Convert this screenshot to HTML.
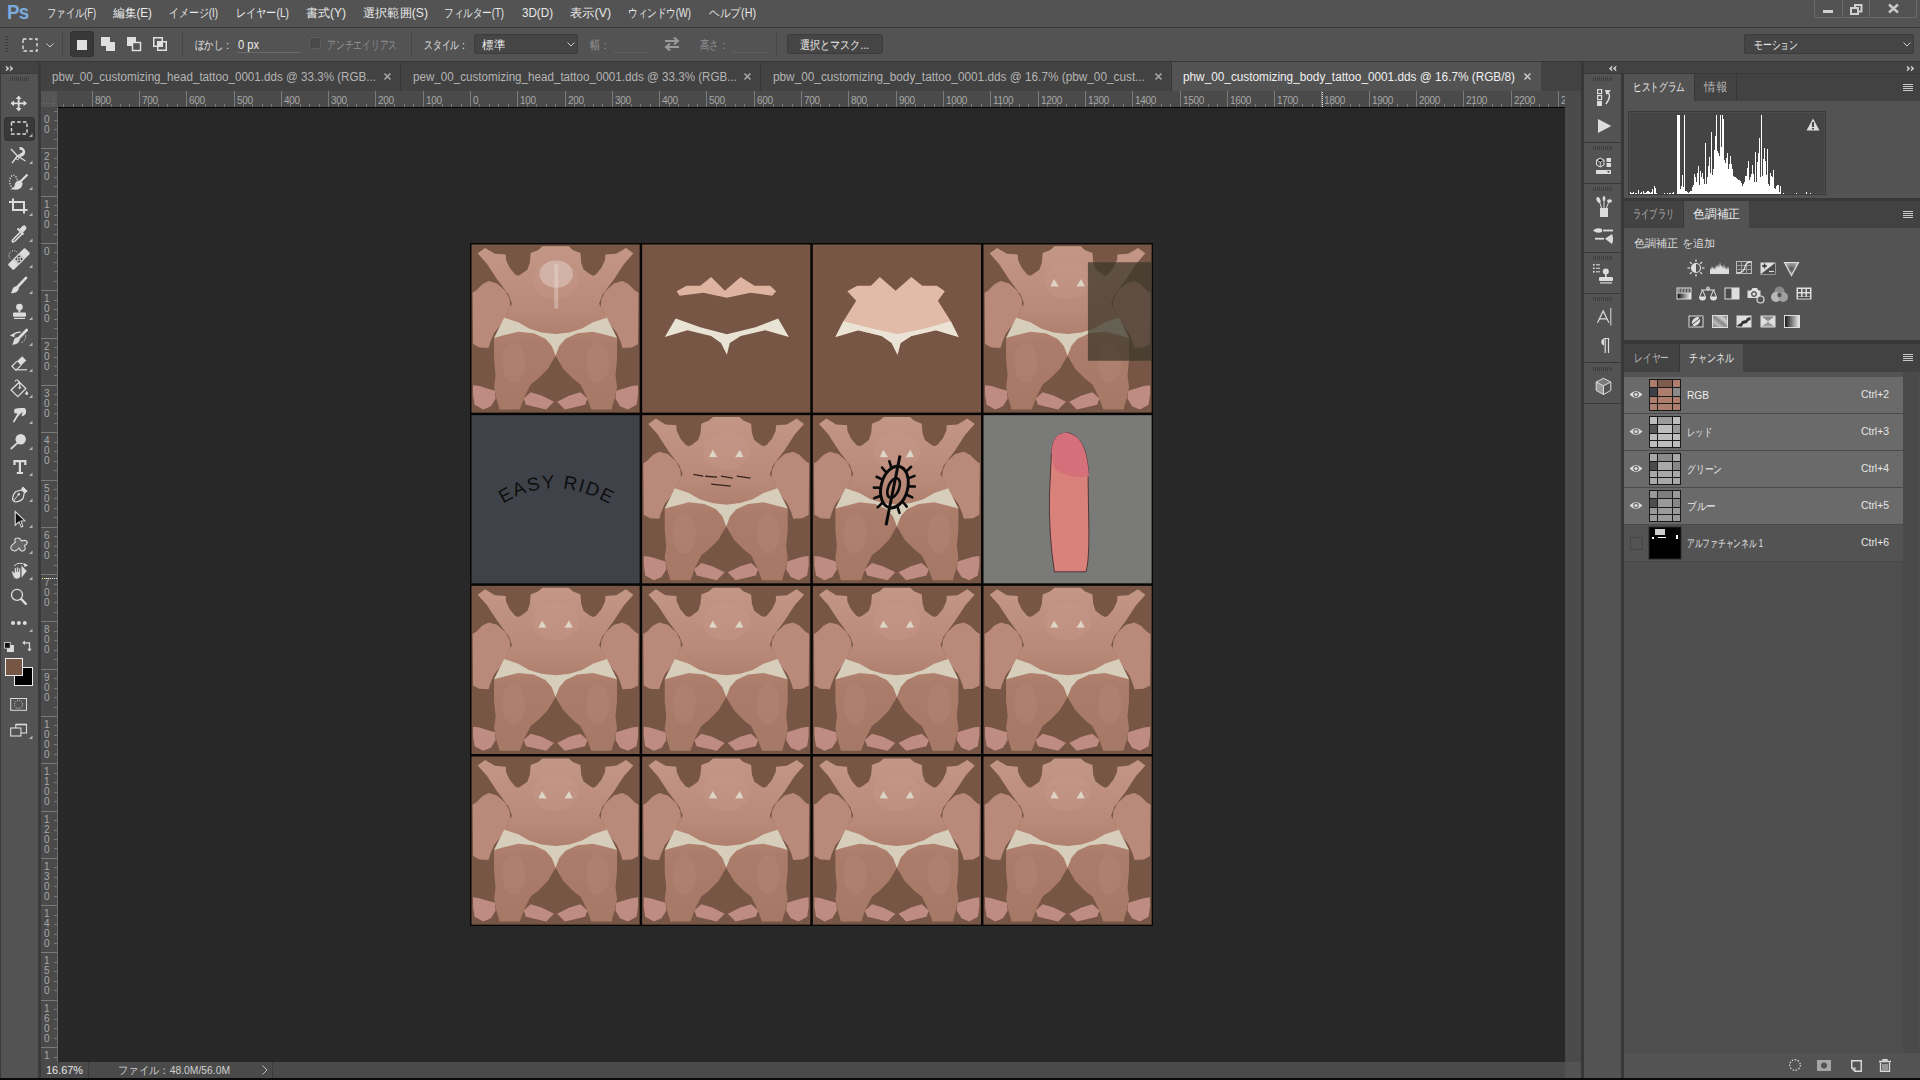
<!DOCTYPE html>
<html><head><meta charset="utf-8">
<style>
*{margin:0;padding:0;box-sizing:border-box}
html,body{width:1920px;height:1080px;overflow:hidden}
body{background:#535353;font-family:"Liberation Sans",sans-serif;position:relative;color:#e6e6e6;font-size:12px}
.a{position:absolute}
.t{position:absolute;white-space:nowrap;line-height:1;transform-origin:0 0}
svg{position:absolute;overflow:visible}
</style></head><body>
<div class="a" style="left:0px;top:0px;width:1920px;height:27px;background:#535353;"></div>
<div class="a" style="left:0px;top:27px;width:1920px;height:1px;background:#383838;"></div>
<div class="a" style="left:0px;top:28px;width:1920px;height:33px;background:#535353;"></div>
<div class="a" style="left:0px;top:61px;width:1920px;height:1px;background:#383838;"></div>
<div class="a" style="left:0px;top:62px;width:41px;height:1018px;background:#3a3a3a;"></div>
<div class="a" style="left:1px;top:62px;width:37px;height:11px;background:#424242;"></div>
<div class="a" style="left:1px;top:74px;width:37px;height:1004px;background:#535353;"></div>
<div class="a" style="left:41px;top:62px;width:1540px;height:29px;background:#424242;"></div>
<div class="a" style="left:41px;top:91px;width:1540px;height:16px;background:#4a4a4a;"></div>
<div class="a" style="left:41px;top:107px;width:16px;height:955px;background:#4a4a4a;"></div>
<div class="a" style="left:41px;top:91px;width:16px;height:16px;background:#555555;"></div>
<div class="a" style="left:58px;top:107px;width:1507px;height:955px;background:#282828;"></div>
<div class="a" style="left:58px;top:107px;width:1507px;height:1px;background:#050505;"></div>
<div class="a" style="left:57px;top:108px;width:1px;height:954px;background:#6e6e6e;"></div>
<div class="a" style="left:1565px;top:107px;width:16px;height:955px;background:#4a4a4a;"></div>
<div class="a" style="left:41px;top:1062px;width:1540px;height:16px;background:#4a4a4a;"></div>
<div class="a" style="left:0px;top:1078px;width:1920px;height:2px;background:#0a0a0a;"></div>
<div class="a" style="left:1581px;top:62px;width:3px;height:1016px;background:#383838;"></div>
<div class="a" style="left:1584px;top:62px;width:336px;height:11px;background:#424242;"></div>
<div class="a" style="left:1584px;top:73px;width:336px;height:1px;background:#383838;"></div>
<div class="a" style="left:1584px;top:74px;width:38px;height:1004px;background:#535353;"></div>
<div class="a" style="left:1621px;top:74px;width:3px;height:1004px;background:#383838;"></div>
<div class="a" style="left:1624px;top:74px;width:296px;height:1004px;background:#535353;"></div>
<div class="t" style="left:7px;top:1px;font-size:21px;font-weight:bold;color:#79abdd;letter-spacing:-0.8px;--w:21.5">Ps</div>
<div class="t" style="left:47px;top:7px;font-size:12px;color:#e8e8e8;--w:49;">ファイル(F)</div>
<div class="t" style="left:113px;top:7px;font-size:12px;color:#e8e8e8;--w:39;">編集(E)</div>
<div class="t" style="left:169px;top:7px;font-size:12px;color:#e8e8e8;--w:49;">イメージ(I)</div>
<div class="t" style="left:236px;top:7px;font-size:12px;color:#e8e8e8;--w:53;">レイヤー(L)</div>
<div class="t" style="left:306px;top:7px;font-size:12px;color:#e8e8e8;--w:40;">書式(Y)</div>
<div class="t" style="left:363px;top:7px;font-size:12px;color:#e8e8e8;--w:65;">選択範囲(S)</div>
<div class="t" style="left:444px;top:7px;font-size:12px;color:#e8e8e8;--w:60;">フィルター(T)</div>
<div class="t" style="left:522px;top:7px;font-size:12px;color:#e8e8e8;--w:31;">3D(D)</div>
<div class="t" style="left:570px;top:7px;font-size:12px;color:#e8e8e8;--w:41;">表示(V)</div>
<div class="t" style="left:628px;top:7px;font-size:12px;color:#e8e8e8;--w:63;">ウィンドウ(W)</div>
<div class="t" style="left:709px;top:7px;font-size:12px;color:#e8e8e8;--w:47;">ヘルプ(H)</div>
<div class="a" style="left:1814px;top:0px;width:103px;height:18px;background:transparent;border:1px solid #6a6a6a;border-top:none;border-radius:0 0 3px 3px"></div>
<div class="a" style="left:1842px;top:0px;width:1px;height:17px;background:#6a6a6a;"></div>
<div class="a" style="left:1869px;top:0px;width:1px;height:17px;background:#6a6a6a;"></div>
<div class="a" style="left:1823px;top:10px;width:10px;height:3px;background:#cfcfcf;"></div>
<svg style="left:1850px;top:4px" width="13" height="11"><path d="M5 3.5V1H11.5V7.5H8.5" fill="none" stroke="#cfcfcf" stroke-width="2"/><rect x="1" y="4" width="7" height="6" fill="none" stroke="#cfcfcf" stroke-width="2"/></svg>
<svg style="left:1888px;top:4px" width="11" height="9"><path d="M1 0.5L10 8.5M10 0.5L1 8.5" stroke="#c8c8c8" stroke-width="2.4"/></svg>
<div class="a" style="left:5px;top:36px;width:3px;height:1px;background:#3c3c3c;"></div>
<div class="a" style="left:5px;top:39px;width:3px;height:1px;background:#3c3c3c;"></div>
<div class="a" style="left:5px;top:42px;width:3px;height:1px;background:#3c3c3c;"></div>
<div class="a" style="left:5px;top:45px;width:3px;height:1px;background:#3c3c3c;"></div>
<div class="a" style="left:5px;top:48px;width:3px;height:1px;background:#3c3c3c;"></div>
<div class="a" style="left:5px;top:51px;width:3px;height:1px;background:#3c3c3c;"></div>
<svg style="left:22px;top:38px" width="16" height="14"><rect x="1" y="1" width="14" height="12" fill="none" stroke="#e0e0e0" stroke-width="1.4" stroke-dasharray="3.5 2.5"/></svg>
<svg style="left:46px;top:43px" width="8" height="5"><path d="M0.5 0.5L4 4L7.5 0.5" fill="none" stroke="#cfcfcf" stroke-width="1"/></svg>
<div class="a" style="left:62px;top:32px;width:1px;height:25px;background:#454545;"></div>
<div class="a" style="left:70px;top:31px;width:24px;height:26px;background:#383838;border-radius:3px;border:1px solid #333"></div>
<div class="a" style="left:77px;top:40px;width:10px;height:10px;background:#e0e0e0;"></div>
<svg style="left:101px;top:37px" width="15" height="15"><rect x="0" y="0" width="9" height="9" fill="#e0e0e0"/><rect x="5" y="5" width="9" height="9" fill="#e0e0e0"/></svg>
<svg style="left:127px;top:37px" width="15" height="15"><rect x="0" y="0" width="9" height="9" fill="#e0e0e0"/><rect x="5.5" y="5.5" width="8" height="8" fill="#535353" stroke="#e0e0e0" stroke-width="1.5"/></svg>
<svg style="left:153px;top:37px" width="15" height="15"><rect x="0.75" y="0.75" width="8.5" height="8.5" fill="none" stroke="#e0e0e0" stroke-width="1.5"/><rect x="4.75" y="4.75" width="8.5" height="8.5" fill="none" stroke="#e0e0e0" stroke-width="1.5"/><rect x="4.75" y="4.75" width="4.5" height="4.5" fill="#e0e0e0"/></svg>
<div class="a" style="left:182px;top:32px;width:1px;height:25px;background:#454545;"></div>
<div class="t" style="left:195px;top:39px;font-size:12px;color:#e0e0e0;--w:37;">ぼかし：</div>
<div class="t" style="left:238px;top:39px;font-size:12px;color:#ececec;--w:21;">0 px</div>
<div class="a" style="left:237px;top:52px;width:64px;height:1px;background:#6a6a6a;"></div>
<div class="a" style="left:309px;top:37px;width:12px;height:12px;background:#4a4a4a;border:1px solid #5e5e5e;border-radius:2px"></div>
<div class="t" style="left:327px;top:39px;font-size:12px;color:#8f8f8f;--w:70;">アンチエイリアス</div>
<div class="a" style="left:411px;top:32px;width:1px;height:25px;background:#454545;"></div>
<div class="t" style="left:424px;top:39px;font-size:12px;color:#e0e0e0;--w:44;">スタイル：</div>
<div class="a" style="left:474px;top:34px;width:104px;height:20px;background:#454545;border:1px solid #3c3c3c;border-radius:2px"></div>
<div class="t" style="left:482px;top:39px;font-size:12px;color:#ececec;--w:23;">標準</div>
<svg style="left:567px;top:42px" width="8" height="5"><path d="M0.5 0.5L4 4L7.5 0.5" fill="none" stroke="#cfcfcf" stroke-width="1"/></svg>
<div class="t" style="left:590px;top:39px;font-size:12px;color:#8f8f8f;--w:20;">幅：</div>
<div class="a" style="left:613px;top:52px;width:36px;height:1px;background:#5e5e5e;"></div>
<svg style="left:664px;top:37px" width="16" height="14"><path d="M1 4H14M10 0.5L14 4L10 7.5" fill="none" stroke="#9a9a9a" stroke-width="2"/><path d="M15 10H2M6 6.5L2 10L6 13.5" fill="none" stroke="#9a9a9a" stroke-width="2"/></svg>
<div class="t" style="left:700px;top:39px;font-size:12px;color:#8f8f8f;--w:28;">高さ：</div>
<div class="a" style="left:731px;top:52px;width:36px;height:1px;background:#5e5e5e;"></div>
<div class="a" style="left:776px;top:32px;width:1px;height:25px;background:#454545;"></div>
<div class="a" style="left:787px;top:34px;width:96px;height:20px;background:#454545;border:1px solid #3c3c3c;border-radius:3px"></div>
<div class="t" style="left:800px;top:39px;font-size:12px;color:#ececec;--w:69;">選択とマスク...</div>
<div class="a" style="left:1744px;top:34px;width:170px;height:20px;background:#454545;border:1px solid #3c3c3c;border-radius:2px"></div>
<div class="t" style="left:1754px;top:39px;font-size:12px;color:#e6e6e6;--w:44;">モーション</div>
<svg style="left:1903px;top:42px" width="8" height="5"><path d="M0.5 0.5L4 4L7.5 0.5" fill="none" stroke="#cfcfcf" stroke-width="1"/></svg>
<div class="a" style="left:400px;top:62px;width:1px;height:29px;background:#383838;"></div>
<div class="t" style="left:52px;top:71px;font-size:12px;color:#b4b4b4;--w:324;">pbw_00_customizing_head_tattoo_0001.dds @ 33.3% (RGB...</div>
<svg style="left:384px;top:73px" width="7" height="7"><path d="M0.5 0.5L6.5 6.5M6.5 0.5L0.5 6.5" stroke="#a8a8a8" stroke-width="1.6"/></svg>
<div class="a" style="left:760px;top:62px;width:1px;height:29px;background:#383838;"></div>
<div class="t" style="left:413px;top:71px;font-size:12px;color:#b4b4b4;--w:324;">pew_00_customizing_head_tattoo_0001.dds @ 33.3% (RGB...</div>
<svg style="left:744px;top:73px" width="7" height="7"><path d="M0.5 0.5L6.5 6.5M6.5 0.5L0.5 6.5" stroke="#a8a8a8" stroke-width="1.6"/></svg>
<div class="a" style="left:1171px;top:62px;width:1px;height:29px;background:#383838;"></div>
<div class="t" style="left:773px;top:71px;font-size:12px;color:#b4b4b4;--w:372;">pbw_00_customizing_body_tattoo_0001.dds @ 16.7% (pbw_00_cust...</div>
<svg style="left:1155px;top:73px" width="7" height="7"><path d="M0.5 0.5L6.5 6.5M6.5 0.5L0.5 6.5" stroke="#a8a8a8" stroke-width="1.6"/></svg>
<div class="a" style="left:1172px;top:62px;width:369px;height:29px;background:#535353;"></div>
<div class="t" style="left:1183px;top:71px;font-size:12px;color:#f0f0f0;--w:332;">phw_00_customizing_body_tattoo_0001.dds @ 16.7% (RGB/8)</div>
<svg style="left:1524px;top:73px" width="7" height="7"><path d="M0.5 0.5L6.5 6.5M6.5 0.5L0.5 6.5" stroke="#c4c4c4" stroke-width="1.6"/></svg>
<div class="a" style="left:57px;top:91px;width:1508px;height:16px;overflow:hidden">
<div class="a" style="left:6px;top:13px;width:1px;height:3px;background:#7a7a7a;"></div>
<div class="a" style="left:16px;top:13px;width:1px;height:3px;background:#7a7a7a;"></div>
<div class="a" style="left:25px;top:13px;width:1px;height:3px;background:#7a7a7a;"></div>
<div class="a" style="left:35px;top:0px;width:1px;height:16px;background:#7a7a7a;"></div>
<div class="t" style="left:38px;top:5px;font-size:10px;color:#a8a8a8;letter-spacing:-0.3px">800</div>
<div class="a" style="left:44px;top:13px;width:1px;height:3px;background:#7a7a7a;"></div>
<div class="a" style="left:54px;top:13px;width:1px;height:3px;background:#7a7a7a;"></div>
<div class="a" style="left:63px;top:13px;width:1px;height:3px;background:#7a7a7a;"></div>
<div class="a" style="left:72px;top:13px;width:1px;height:3px;background:#7a7a7a;"></div>
<div class="a" style="left:82px;top:0px;width:1px;height:16px;background:#7a7a7a;"></div>
<div class="t" style="left:85px;top:5px;font-size:10px;color:#a8a8a8;letter-spacing:-0.3px">700</div>
<div class="a" style="left:91px;top:13px;width:1px;height:3px;background:#7a7a7a;"></div>
<div class="a" style="left:101px;top:13px;width:1px;height:3px;background:#7a7a7a;"></div>
<div class="a" style="left:110px;top:13px;width:1px;height:3px;background:#7a7a7a;"></div>
<div class="a" style="left:120px;top:13px;width:1px;height:3px;background:#7a7a7a;"></div>
<div class="a" style="left:129px;top:0px;width:1px;height:16px;background:#7a7a7a;"></div>
<div class="t" style="left:132px;top:5px;font-size:10px;color:#a8a8a8;letter-spacing:-0.3px">600</div>
<div class="a" style="left:139px;top:13px;width:1px;height:3px;background:#7a7a7a;"></div>
<div class="a" style="left:148px;top:13px;width:1px;height:3px;background:#7a7a7a;"></div>
<div class="a" style="left:158px;top:13px;width:1px;height:3px;background:#7a7a7a;"></div>
<div class="a" style="left:167px;top:13px;width:1px;height:3px;background:#7a7a7a;"></div>
<div class="a" style="left:177px;top:0px;width:1px;height:16px;background:#7a7a7a;"></div>
<div class="t" style="left:180px;top:5px;font-size:10px;color:#a8a8a8;letter-spacing:-0.3px">500</div>
<div class="a" style="left:186px;top:13px;width:1px;height:3px;background:#7a7a7a;"></div>
<div class="a" style="left:195px;top:13px;width:1px;height:3px;background:#7a7a7a;"></div>
<div class="a" style="left:205px;top:13px;width:1px;height:3px;background:#7a7a7a;"></div>
<div class="a" style="left:214px;top:13px;width:1px;height:3px;background:#7a7a7a;"></div>
<div class="a" style="left:224px;top:0px;width:1px;height:16px;background:#7a7a7a;"></div>
<div class="t" style="left:227px;top:5px;font-size:10px;color:#a8a8a8;letter-spacing:-0.3px">400</div>
<div class="a" style="left:233px;top:13px;width:1px;height:3px;background:#7a7a7a;"></div>
<div class="a" style="left:243px;top:13px;width:1px;height:3px;background:#7a7a7a;"></div>
<div class="a" style="left:252px;top:13px;width:1px;height:3px;background:#7a7a7a;"></div>
<div class="a" style="left:262px;top:13px;width:1px;height:3px;background:#7a7a7a;"></div>
<div class="a" style="left:271px;top:0px;width:1px;height:16px;background:#7a7a7a;"></div>
<div class="t" style="left:274px;top:5px;font-size:10px;color:#a8a8a8;letter-spacing:-0.3px">300</div>
<div class="a" style="left:281px;top:13px;width:1px;height:3px;background:#7a7a7a;"></div>
<div class="a" style="left:290px;top:13px;width:1px;height:3px;background:#7a7a7a;"></div>
<div class="a" style="left:299px;top:13px;width:1px;height:3px;background:#7a7a7a;"></div>
<div class="a" style="left:309px;top:13px;width:1px;height:3px;background:#7a7a7a;"></div>
<div class="a" style="left:318px;top:0px;width:1px;height:16px;background:#7a7a7a;"></div>
<div class="t" style="left:321px;top:5px;font-size:10px;color:#a8a8a8;letter-spacing:-0.3px">200</div>
<div class="a" style="left:328px;top:13px;width:1px;height:3px;background:#7a7a7a;"></div>
<div class="a" style="left:337px;top:13px;width:1px;height:3px;background:#7a7a7a;"></div>
<div class="a" style="left:347px;top:13px;width:1px;height:3px;background:#7a7a7a;"></div>
<div class="a" style="left:356px;top:13px;width:1px;height:3px;background:#7a7a7a;"></div>
<div class="a" style="left:366px;top:0px;width:1px;height:16px;background:#7a7a7a;"></div>
<div class="t" style="left:369px;top:5px;font-size:10px;color:#a8a8a8;letter-spacing:-0.3px">100</div>
<div class="a" style="left:375px;top:13px;width:1px;height:3px;background:#7a7a7a;"></div>
<div class="a" style="left:385px;top:13px;width:1px;height:3px;background:#7a7a7a;"></div>
<div class="a" style="left:394px;top:13px;width:1px;height:3px;background:#7a7a7a;"></div>
<div class="a" style="left:404px;top:13px;width:1px;height:3px;background:#7a7a7a;"></div>
<div class="a" style="left:413px;top:0px;width:1px;height:16px;background:#7a7a7a;"></div>
<div class="t" style="left:416px;top:5px;font-size:10px;color:#a8a8a8;letter-spacing:-0.3px">0</div>
<div class="a" style="left:422px;top:13px;width:1px;height:3px;background:#7a7a7a;"></div>
<div class="a" style="left:432px;top:13px;width:1px;height:3px;background:#7a7a7a;"></div>
<div class="a" style="left:441px;top:13px;width:1px;height:3px;background:#7a7a7a;"></div>
<div class="a" style="left:451px;top:13px;width:1px;height:3px;background:#7a7a7a;"></div>
<div class="a" style="left:460px;top:0px;width:1px;height:16px;background:#7a7a7a;"></div>
<div class="t" style="left:463px;top:5px;font-size:10px;color:#a8a8a8;letter-spacing:-0.3px">100</div>
<div class="a" style="left:470px;top:13px;width:1px;height:3px;background:#7a7a7a;"></div>
<div class="a" style="left:479px;top:13px;width:1px;height:3px;background:#7a7a7a;"></div>
<div class="a" style="left:489px;top:13px;width:1px;height:3px;background:#7a7a7a;"></div>
<div class="a" style="left:498px;top:13px;width:1px;height:3px;background:#7a7a7a;"></div>
<div class="a" style="left:508px;top:0px;width:1px;height:16px;background:#7a7a7a;"></div>
<div class="t" style="left:511px;top:5px;font-size:10px;color:#a8a8a8;letter-spacing:-0.3px">200</div>
<div class="a" style="left:517px;top:13px;width:1px;height:3px;background:#7a7a7a;"></div>
<div class="a" style="left:527px;top:13px;width:1px;height:3px;background:#7a7a7a;"></div>
<div class="a" style="left:536px;top:13px;width:1px;height:3px;background:#7a7a7a;"></div>
<div class="a" style="left:545px;top:13px;width:1px;height:3px;background:#7a7a7a;"></div>
<div class="a" style="left:555px;top:0px;width:1px;height:16px;background:#7a7a7a;"></div>
<div class="t" style="left:558px;top:5px;font-size:10px;color:#a8a8a8;letter-spacing:-0.3px">300</div>
<div class="a" style="left:564px;top:13px;width:1px;height:3px;background:#7a7a7a;"></div>
<div class="a" style="left:574px;top:13px;width:1px;height:3px;background:#7a7a7a;"></div>
<div class="a" style="left:583px;top:13px;width:1px;height:3px;background:#7a7a7a;"></div>
<div class="a" style="left:593px;top:13px;width:1px;height:3px;background:#7a7a7a;"></div>
<div class="a" style="left:602px;top:0px;width:1px;height:16px;background:#7a7a7a;"></div>
<div class="t" style="left:605px;top:5px;font-size:10px;color:#a8a8a8;letter-spacing:-0.3px">400</div>
<div class="a" style="left:612px;top:13px;width:1px;height:3px;background:#7a7a7a;"></div>
<div class="a" style="left:621px;top:13px;width:1px;height:3px;background:#7a7a7a;"></div>
<div class="a" style="left:631px;top:13px;width:1px;height:3px;background:#7a7a7a;"></div>
<div class="a" style="left:640px;top:13px;width:1px;height:3px;background:#7a7a7a;"></div>
<div class="a" style="left:649px;top:0px;width:1px;height:16px;background:#7a7a7a;"></div>
<div class="t" style="left:652px;top:5px;font-size:10px;color:#a8a8a8;letter-spacing:-0.3px">500</div>
<div class="a" style="left:659px;top:13px;width:1px;height:3px;background:#7a7a7a;"></div>
<div class="a" style="left:668px;top:13px;width:1px;height:3px;background:#7a7a7a;"></div>
<div class="a" style="left:678px;top:13px;width:1px;height:3px;background:#7a7a7a;"></div>
<div class="a" style="left:687px;top:13px;width:1px;height:3px;background:#7a7a7a;"></div>
<div class="a" style="left:697px;top:0px;width:1px;height:16px;background:#7a7a7a;"></div>
<div class="t" style="left:700px;top:5px;font-size:10px;color:#a8a8a8;letter-spacing:-0.3px">600</div>
<div class="a" style="left:706px;top:13px;width:1px;height:3px;background:#7a7a7a;"></div>
<div class="a" style="left:716px;top:13px;width:1px;height:3px;background:#7a7a7a;"></div>
<div class="a" style="left:725px;top:13px;width:1px;height:3px;background:#7a7a7a;"></div>
<div class="a" style="left:735px;top:13px;width:1px;height:3px;background:#7a7a7a;"></div>
<div class="a" style="left:744px;top:0px;width:1px;height:16px;background:#7a7a7a;"></div>
<div class="t" style="left:747px;top:5px;font-size:10px;color:#a8a8a8;letter-spacing:-0.3px">700</div>
<div class="a" style="left:754px;top:13px;width:1px;height:3px;background:#7a7a7a;"></div>
<div class="a" style="left:763px;top:13px;width:1px;height:3px;background:#7a7a7a;"></div>
<div class="a" style="left:772px;top:13px;width:1px;height:3px;background:#7a7a7a;"></div>
<div class="a" style="left:782px;top:13px;width:1px;height:3px;background:#7a7a7a;"></div>
<div class="a" style="left:791px;top:0px;width:1px;height:16px;background:#7a7a7a;"></div>
<div class="t" style="left:794px;top:5px;font-size:10px;color:#a8a8a8;letter-spacing:-0.3px">800</div>
<div class="a" style="left:801px;top:13px;width:1px;height:3px;background:#7a7a7a;"></div>
<div class="a" style="left:810px;top:13px;width:1px;height:3px;background:#7a7a7a;"></div>
<div class="a" style="left:820px;top:13px;width:1px;height:3px;background:#7a7a7a;"></div>
<div class="a" style="left:829px;top:13px;width:1px;height:3px;background:#7a7a7a;"></div>
<div class="a" style="left:839px;top:0px;width:1px;height:16px;background:#7a7a7a;"></div>
<div class="t" style="left:842px;top:5px;font-size:10px;color:#a8a8a8;letter-spacing:-0.3px">900</div>
<div class="a" style="left:848px;top:13px;width:1px;height:3px;background:#7a7a7a;"></div>
<div class="a" style="left:858px;top:13px;width:1px;height:3px;background:#7a7a7a;"></div>
<div class="a" style="left:867px;top:13px;width:1px;height:3px;background:#7a7a7a;"></div>
<div class="a" style="left:877px;top:13px;width:1px;height:3px;background:#7a7a7a;"></div>
<div class="a" style="left:886px;top:0px;width:1px;height:16px;background:#7a7a7a;"></div>
<div class="t" style="left:889px;top:5px;font-size:10px;color:#a8a8a8;letter-spacing:-0.3px">1000</div>
<div class="a" style="left:895px;top:13px;width:1px;height:3px;background:#7a7a7a;"></div>
<div class="a" style="left:905px;top:13px;width:1px;height:3px;background:#7a7a7a;"></div>
<div class="a" style="left:914px;top:13px;width:1px;height:3px;background:#7a7a7a;"></div>
<div class="a" style="left:924px;top:13px;width:1px;height:3px;background:#7a7a7a;"></div>
<div class="a" style="left:933px;top:0px;width:1px;height:16px;background:#7a7a7a;"></div>
<div class="t" style="left:936px;top:5px;font-size:10px;color:#a8a8a8;letter-spacing:-0.3px">1100</div>
<div class="a" style="left:943px;top:13px;width:1px;height:3px;background:#7a7a7a;"></div>
<div class="a" style="left:952px;top:13px;width:1px;height:3px;background:#7a7a7a;"></div>
<div class="a" style="left:962px;top:13px;width:1px;height:3px;background:#7a7a7a;"></div>
<div class="a" style="left:971px;top:13px;width:1px;height:3px;background:#7a7a7a;"></div>
<div class="a" style="left:981px;top:0px;width:1px;height:16px;background:#7a7a7a;"></div>
<div class="t" style="left:984px;top:5px;font-size:10px;color:#a8a8a8;letter-spacing:-0.3px">1200</div>
<div class="a" style="left:990px;top:13px;width:1px;height:3px;background:#7a7a7a;"></div>
<div class="a" style="left:1000px;top:13px;width:1px;height:3px;background:#7a7a7a;"></div>
<div class="a" style="left:1009px;top:13px;width:1px;height:3px;background:#7a7a7a;"></div>
<div class="a" style="left:1018px;top:13px;width:1px;height:3px;background:#7a7a7a;"></div>
<div class="a" style="left:1028px;top:0px;width:1px;height:16px;background:#7a7a7a;"></div>
<div class="t" style="left:1031px;top:5px;font-size:10px;color:#a8a8a8;letter-spacing:-0.3px">1300</div>
<div class="a" style="left:1037px;top:13px;width:1px;height:3px;background:#7a7a7a;"></div>
<div class="a" style="left:1047px;top:13px;width:1px;height:3px;background:#7a7a7a;"></div>
<div class="a" style="left:1056px;top:13px;width:1px;height:3px;background:#7a7a7a;"></div>
<div class="a" style="left:1066px;top:13px;width:1px;height:3px;background:#7a7a7a;"></div>
<div class="a" style="left:1075px;top:0px;width:1px;height:16px;background:#7a7a7a;"></div>
<div class="t" style="left:1078px;top:5px;font-size:10px;color:#a8a8a8;letter-spacing:-0.3px">1400</div>
<div class="a" style="left:1085px;top:13px;width:1px;height:3px;background:#7a7a7a;"></div>
<div class="a" style="left:1094px;top:13px;width:1px;height:3px;background:#7a7a7a;"></div>
<div class="a" style="left:1104px;top:13px;width:1px;height:3px;background:#7a7a7a;"></div>
<div class="a" style="left:1113px;top:13px;width:1px;height:3px;background:#7a7a7a;"></div>
<div class="a" style="left:1123px;top:0px;width:1px;height:16px;background:#7a7a7a;"></div>
<div class="t" style="left:1126px;top:5px;font-size:10px;color:#a8a8a8;letter-spacing:-0.3px">1500</div>
<div class="a" style="left:1132px;top:13px;width:1px;height:3px;background:#7a7a7a;"></div>
<div class="a" style="left:1141px;top:13px;width:1px;height:3px;background:#7a7a7a;"></div>
<div class="a" style="left:1151px;top:13px;width:1px;height:3px;background:#7a7a7a;"></div>
<div class="a" style="left:1160px;top:13px;width:1px;height:3px;background:#7a7a7a;"></div>
<div class="a" style="left:1170px;top:0px;width:1px;height:16px;background:#7a7a7a;"></div>
<div class="t" style="left:1173px;top:5px;font-size:10px;color:#a8a8a8;letter-spacing:-0.3px">1600</div>
<div class="a" style="left:1179px;top:13px;width:1px;height:3px;background:#7a7a7a;"></div>
<div class="a" style="left:1189px;top:13px;width:1px;height:3px;background:#7a7a7a;"></div>
<div class="a" style="left:1198px;top:13px;width:1px;height:3px;background:#7a7a7a;"></div>
<div class="a" style="left:1208px;top:13px;width:1px;height:3px;background:#7a7a7a;"></div>
<div class="a" style="left:1217px;top:0px;width:1px;height:16px;background:#7a7a7a;"></div>
<div class="t" style="left:1220px;top:5px;font-size:10px;color:#a8a8a8;letter-spacing:-0.3px">1700</div>
<div class="a" style="left:1227px;top:13px;width:1px;height:3px;background:#7a7a7a;"></div>
<div class="a" style="left:1236px;top:13px;width:1px;height:3px;background:#7a7a7a;"></div>
<div class="a" style="left:1245px;top:13px;width:1px;height:3px;background:#7a7a7a;"></div>
<div class="a" style="left:1255px;top:13px;width:1px;height:3px;background:#7a7a7a;"></div>
<div class="a" style="left:1264px;top:0px;width:1px;height:16px;background:#7a7a7a;"></div>
<div class="t" style="left:1267px;top:5px;font-size:10px;color:#a8a8a8;letter-spacing:-0.3px">1800</div>
<div class="a" style="left:1274px;top:13px;width:1px;height:3px;background:#7a7a7a;"></div>
<div class="a" style="left:1283px;top:13px;width:1px;height:3px;background:#7a7a7a;"></div>
<div class="a" style="left:1293px;top:13px;width:1px;height:3px;background:#7a7a7a;"></div>
<div class="a" style="left:1302px;top:13px;width:1px;height:3px;background:#7a7a7a;"></div>
<div class="a" style="left:1312px;top:0px;width:1px;height:16px;background:#7a7a7a;"></div>
<div class="t" style="left:1315px;top:5px;font-size:10px;color:#a8a8a8;letter-spacing:-0.3px">1900</div>
<div class="a" style="left:1321px;top:13px;width:1px;height:3px;background:#7a7a7a;"></div>
<div class="a" style="left:1331px;top:13px;width:1px;height:3px;background:#7a7a7a;"></div>
<div class="a" style="left:1340px;top:13px;width:1px;height:3px;background:#7a7a7a;"></div>
<div class="a" style="left:1350px;top:13px;width:1px;height:3px;background:#7a7a7a;"></div>
<div class="a" style="left:1359px;top:0px;width:1px;height:16px;background:#7a7a7a;"></div>
<div class="t" style="left:1362px;top:5px;font-size:10px;color:#a8a8a8;letter-spacing:-0.3px">2000</div>
<div class="a" style="left:1368px;top:13px;width:1px;height:3px;background:#7a7a7a;"></div>
<div class="a" style="left:1378px;top:13px;width:1px;height:3px;background:#7a7a7a;"></div>
<div class="a" style="left:1387px;top:13px;width:1px;height:3px;background:#7a7a7a;"></div>
<div class="a" style="left:1397px;top:13px;width:1px;height:3px;background:#7a7a7a;"></div>
<div class="a" style="left:1406px;top:0px;width:1px;height:16px;background:#7a7a7a;"></div>
<div class="t" style="left:1409px;top:5px;font-size:10px;color:#a8a8a8;letter-spacing:-0.3px">2100</div>
<div class="a" style="left:1416px;top:13px;width:1px;height:3px;background:#7a7a7a;"></div>
<div class="a" style="left:1425px;top:13px;width:1px;height:3px;background:#7a7a7a;"></div>
<div class="a" style="left:1435px;top:13px;width:1px;height:3px;background:#7a7a7a;"></div>
<div class="a" style="left:1444px;top:13px;width:1px;height:3px;background:#7a7a7a;"></div>
<div class="a" style="left:1454px;top:0px;width:1px;height:16px;background:#7a7a7a;"></div>
<div class="t" style="left:1457px;top:5px;font-size:10px;color:#a8a8a8;letter-spacing:-0.3px">2200</div>
<div class="a" style="left:1463px;top:13px;width:1px;height:3px;background:#7a7a7a;"></div>
<div class="a" style="left:1473px;top:13px;width:1px;height:3px;background:#7a7a7a;"></div>
<div class="a" style="left:1482px;top:13px;width:1px;height:3px;background:#7a7a7a;"></div>
<div class="a" style="left:1491px;top:13px;width:1px;height:3px;background:#7a7a7a;"></div>
<div class="a" style="left:1501px;top:0px;width:1px;height:16px;background:#7a7a7a;"></div>
<div class="t" style="left:1504px;top:5px;font-size:10px;color:#a8a8a8;letter-spacing:-0.3px">2300</div>
</div>
<div class="t" style="left:44px;top:115px;font-size:10px;color:#a8a8a8;">0</div>
<div class="t" style="left:44px;top:125px;font-size:10px;color:#a8a8a8;">0</div>
<div class="a" style="left:54px;top:111px;width:3px;height:1px;background:#7a7a7a;"></div>
<div class="a" style="left:54px;top:120px;width:3px;height:1px;background:#7a7a7a;"></div>
<div class="a" style="left:54px;top:129px;width:3px;height:1px;background:#7a7a7a;"></div>
<div class="a" style="left:54px;top:139px;width:3px;height:1px;background:#7a7a7a;"></div>
<div class="a" style="left:41px;top:148px;width:16px;height:1px;background:#7a7a7a;"></div>
<div class="t" style="left:44px;top:152px;font-size:10px;color:#a8a8a8;">2</div>
<div class="t" style="left:44px;top:162px;font-size:10px;color:#a8a8a8;">0</div>
<div class="t" style="left:44px;top:172px;font-size:10px;color:#a8a8a8;">0</div>
<div class="a" style="left:54px;top:158px;width:3px;height:1px;background:#7a7a7a;"></div>
<div class="a" style="left:54px;top:167px;width:3px;height:1px;background:#7a7a7a;"></div>
<div class="a" style="left:54px;top:177px;width:3px;height:1px;background:#7a7a7a;"></div>
<div class="a" style="left:54px;top:186px;width:3px;height:1px;background:#7a7a7a;"></div>
<div class="a" style="left:41px;top:196px;width:16px;height:1px;background:#7a7a7a;"></div>
<div class="t" style="left:44px;top:200px;font-size:10px;color:#a8a8a8;">1</div>
<div class="t" style="left:44px;top:210px;font-size:10px;color:#a8a8a8;">0</div>
<div class="t" style="left:44px;top:220px;font-size:10px;color:#a8a8a8;">0</div>
<div class="a" style="left:54px;top:205px;width:3px;height:1px;background:#7a7a7a;"></div>
<div class="a" style="left:54px;top:215px;width:3px;height:1px;background:#7a7a7a;"></div>
<div class="a" style="left:54px;top:224px;width:3px;height:1px;background:#7a7a7a;"></div>
<div class="a" style="left:54px;top:234px;width:3px;height:1px;background:#7a7a7a;"></div>
<div class="a" style="left:41px;top:243px;width:16px;height:1px;background:#7a7a7a;"></div>
<div class="t" style="left:44px;top:247px;font-size:10px;color:#a8a8a8;">0</div>
<div class="a" style="left:54px;top:252px;width:3px;height:1px;background:#7a7a7a;"></div>
<div class="a" style="left:54px;top:262px;width:3px;height:1px;background:#7a7a7a;"></div>
<div class="a" style="left:54px;top:271px;width:3px;height:1px;background:#7a7a7a;"></div>
<div class="a" style="left:54px;top:281px;width:3px;height:1px;background:#7a7a7a;"></div>
<div class="a" style="left:41px;top:290px;width:16px;height:1px;background:#7a7a7a;"></div>
<div class="t" style="left:44px;top:294px;font-size:10px;color:#a8a8a8;">1</div>
<div class="t" style="left:44px;top:304px;font-size:10px;color:#a8a8a8;">0</div>
<div class="t" style="left:44px;top:314px;font-size:10px;color:#a8a8a8;">0</div>
<div class="a" style="left:54px;top:300px;width:3px;height:1px;background:#7a7a7a;"></div>
<div class="a" style="left:54px;top:309px;width:3px;height:1px;background:#7a7a7a;"></div>
<div class="a" style="left:54px;top:319px;width:3px;height:1px;background:#7a7a7a;"></div>
<div class="a" style="left:54px;top:328px;width:3px;height:1px;background:#7a7a7a;"></div>
<div class="a" style="left:41px;top:338px;width:16px;height:1px;background:#7a7a7a;"></div>
<div class="t" style="left:44px;top:342px;font-size:10px;color:#a8a8a8;">2</div>
<div class="t" style="left:44px;top:352px;font-size:10px;color:#a8a8a8;">0</div>
<div class="t" style="left:44px;top:362px;font-size:10px;color:#a8a8a8;">0</div>
<div class="a" style="left:54px;top:347px;width:3px;height:1px;background:#7a7a7a;"></div>
<div class="a" style="left:54px;top:357px;width:3px;height:1px;background:#7a7a7a;"></div>
<div class="a" style="left:54px;top:366px;width:3px;height:1px;background:#7a7a7a;"></div>
<div class="a" style="left:54px;top:375px;width:3px;height:1px;background:#7a7a7a;"></div>
<div class="a" style="left:41px;top:385px;width:16px;height:1px;background:#7a7a7a;"></div>
<div class="t" style="left:44px;top:389px;font-size:10px;color:#a8a8a8;">3</div>
<div class="t" style="left:44px;top:399px;font-size:10px;color:#a8a8a8;">0</div>
<div class="t" style="left:44px;top:409px;font-size:10px;color:#a8a8a8;">0</div>
<div class="a" style="left:54px;top:394px;width:3px;height:1px;background:#7a7a7a;"></div>
<div class="a" style="left:54px;top:404px;width:3px;height:1px;background:#7a7a7a;"></div>
<div class="a" style="left:54px;top:413px;width:3px;height:1px;background:#7a7a7a;"></div>
<div class="a" style="left:54px;top:423px;width:3px;height:1px;background:#7a7a7a;"></div>
<div class="a" style="left:41px;top:432px;width:16px;height:1px;background:#7a7a7a;"></div>
<div class="t" style="left:44px;top:436px;font-size:10px;color:#a8a8a8;">4</div>
<div class="t" style="left:44px;top:446px;font-size:10px;color:#a8a8a8;">0</div>
<div class="t" style="left:44px;top:456px;font-size:10px;color:#a8a8a8;">0</div>
<div class="a" style="left:54px;top:442px;width:3px;height:1px;background:#7a7a7a;"></div>
<div class="a" style="left:54px;top:451px;width:3px;height:1px;background:#7a7a7a;"></div>
<div class="a" style="left:54px;top:461px;width:3px;height:1px;background:#7a7a7a;"></div>
<div class="a" style="left:54px;top:470px;width:3px;height:1px;background:#7a7a7a;"></div>
<div class="a" style="left:41px;top:480px;width:16px;height:1px;background:#7a7a7a;"></div>
<div class="t" style="left:44px;top:484px;font-size:10px;color:#a8a8a8;">5</div>
<div class="t" style="left:44px;top:494px;font-size:10px;color:#a8a8a8;">0</div>
<div class="t" style="left:44px;top:504px;font-size:10px;color:#a8a8a8;">0</div>
<div class="a" style="left:54px;top:489px;width:3px;height:1px;background:#7a7a7a;"></div>
<div class="a" style="left:54px;top:498px;width:3px;height:1px;background:#7a7a7a;"></div>
<div class="a" style="left:54px;top:508px;width:3px;height:1px;background:#7a7a7a;"></div>
<div class="a" style="left:54px;top:517px;width:3px;height:1px;background:#7a7a7a;"></div>
<div class="a" style="left:41px;top:527px;width:16px;height:1px;background:#7a7a7a;"></div>
<div class="t" style="left:44px;top:531px;font-size:10px;color:#a8a8a8;">6</div>
<div class="t" style="left:44px;top:541px;font-size:10px;color:#a8a8a8;">0</div>
<div class="t" style="left:44px;top:551px;font-size:10px;color:#a8a8a8;">0</div>
<div class="a" style="left:54px;top:536px;width:3px;height:1px;background:#7a7a7a;"></div>
<div class="a" style="left:54px;top:546px;width:3px;height:1px;background:#7a7a7a;"></div>
<div class="a" style="left:54px;top:555px;width:3px;height:1px;background:#7a7a7a;"></div>
<div class="a" style="left:54px;top:565px;width:3px;height:1px;background:#7a7a7a;"></div>
<div class="a" style="left:41px;top:574px;width:16px;height:1px;background:#7a7a7a;"></div>
<div class="t" style="left:44px;top:578px;font-size:10px;color:#a8a8a8;">7</div>
<div class="t" style="left:44px;top:588px;font-size:10px;color:#a8a8a8;">0</div>
<div class="t" style="left:44px;top:598px;font-size:10px;color:#a8a8a8;">0</div>
<div class="a" style="left:54px;top:584px;width:3px;height:1px;background:#7a7a7a;"></div>
<div class="a" style="left:54px;top:593px;width:3px;height:1px;background:#7a7a7a;"></div>
<div class="a" style="left:54px;top:602px;width:3px;height:1px;background:#7a7a7a;"></div>
<div class="a" style="left:54px;top:612px;width:3px;height:1px;background:#7a7a7a;"></div>
<div class="a" style="left:41px;top:621px;width:16px;height:1px;background:#7a7a7a;"></div>
<div class="t" style="left:44px;top:625px;font-size:10px;color:#a8a8a8;">8</div>
<div class="t" style="left:44px;top:635px;font-size:10px;color:#a8a8a8;">0</div>
<div class="t" style="left:44px;top:645px;font-size:10px;color:#a8a8a8;">0</div>
<div class="a" style="left:54px;top:631px;width:3px;height:1px;background:#7a7a7a;"></div>
<div class="a" style="left:54px;top:640px;width:3px;height:1px;background:#7a7a7a;"></div>
<div class="a" style="left:54px;top:650px;width:3px;height:1px;background:#7a7a7a;"></div>
<div class="a" style="left:54px;top:659px;width:3px;height:1px;background:#7a7a7a;"></div>
<div class="a" style="left:41px;top:669px;width:16px;height:1px;background:#7a7a7a;"></div>
<div class="t" style="left:44px;top:673px;font-size:10px;color:#a8a8a8;">9</div>
<div class="t" style="left:44px;top:683px;font-size:10px;color:#a8a8a8;">0</div>
<div class="t" style="left:44px;top:693px;font-size:10px;color:#a8a8a8;">0</div>
<div class="a" style="left:54px;top:678px;width:3px;height:1px;background:#7a7a7a;"></div>
<div class="a" style="left:54px;top:688px;width:3px;height:1px;background:#7a7a7a;"></div>
<div class="a" style="left:54px;top:697px;width:3px;height:1px;background:#7a7a7a;"></div>
<div class="a" style="left:54px;top:707px;width:3px;height:1px;background:#7a7a7a;"></div>
<div class="a" style="left:41px;top:716px;width:16px;height:1px;background:#7a7a7a;"></div>
<div class="t" style="left:44px;top:720px;font-size:10px;color:#a8a8a8;">1</div>
<div class="t" style="left:44px;top:730px;font-size:10px;color:#a8a8a8;">0</div>
<div class="t" style="left:44px;top:740px;font-size:10px;color:#a8a8a8;">0</div>
<div class="t" style="left:44px;top:750px;font-size:10px;color:#a8a8a8;">0</div>
<div class="a" style="left:54px;top:725px;width:3px;height:1px;background:#7a7a7a;"></div>
<div class="a" style="left:54px;top:735px;width:3px;height:1px;background:#7a7a7a;"></div>
<div class="a" style="left:54px;top:744px;width:3px;height:1px;background:#7a7a7a;"></div>
<div class="a" style="left:54px;top:754px;width:3px;height:1px;background:#7a7a7a;"></div>
<div class="a" style="left:41px;top:763px;width:16px;height:1px;background:#7a7a7a;"></div>
<div class="t" style="left:44px;top:767px;font-size:10px;color:#a8a8a8;">1</div>
<div class="t" style="left:44px;top:777px;font-size:10px;color:#a8a8a8;">1</div>
<div class="t" style="left:44px;top:787px;font-size:10px;color:#a8a8a8;">0</div>
<div class="t" style="left:44px;top:797px;font-size:10px;color:#a8a8a8;">0</div>
<div class="a" style="left:54px;top:773px;width:3px;height:1px;background:#7a7a7a;"></div>
<div class="a" style="left:54px;top:782px;width:3px;height:1px;background:#7a7a7a;"></div>
<div class="a" style="left:54px;top:792px;width:3px;height:1px;background:#7a7a7a;"></div>
<div class="a" style="left:54px;top:801px;width:3px;height:1px;background:#7a7a7a;"></div>
<div class="a" style="left:41px;top:811px;width:16px;height:1px;background:#7a7a7a;"></div>
<div class="t" style="left:44px;top:815px;font-size:10px;color:#a8a8a8;">1</div>
<div class="t" style="left:44px;top:825px;font-size:10px;color:#a8a8a8;">2</div>
<div class="t" style="left:44px;top:835px;font-size:10px;color:#a8a8a8;">0</div>
<div class="t" style="left:44px;top:845px;font-size:10px;color:#a8a8a8;">0</div>
<div class="a" style="left:54px;top:820px;width:3px;height:1px;background:#7a7a7a;"></div>
<div class="a" style="left:54px;top:830px;width:3px;height:1px;background:#7a7a7a;"></div>
<div class="a" style="left:54px;top:839px;width:3px;height:1px;background:#7a7a7a;"></div>
<div class="a" style="left:54px;top:848px;width:3px;height:1px;background:#7a7a7a;"></div>
<div class="a" style="left:41px;top:858px;width:16px;height:1px;background:#7a7a7a;"></div>
<div class="t" style="left:44px;top:862px;font-size:10px;color:#a8a8a8;">1</div>
<div class="t" style="left:44px;top:872px;font-size:10px;color:#a8a8a8;">3</div>
<div class="t" style="left:44px;top:882px;font-size:10px;color:#a8a8a8;">0</div>
<div class="t" style="left:44px;top:892px;font-size:10px;color:#a8a8a8;">0</div>
<div class="a" style="left:54px;top:867px;width:3px;height:1px;background:#7a7a7a;"></div>
<div class="a" style="left:54px;top:877px;width:3px;height:1px;background:#7a7a7a;"></div>
<div class="a" style="left:54px;top:886px;width:3px;height:1px;background:#7a7a7a;"></div>
<div class="a" style="left:54px;top:896px;width:3px;height:1px;background:#7a7a7a;"></div>
<div class="a" style="left:41px;top:905px;width:16px;height:1px;background:#7a7a7a;"></div>
<div class="t" style="left:44px;top:909px;font-size:10px;color:#a8a8a8;">1</div>
<div class="t" style="left:44px;top:919px;font-size:10px;color:#a8a8a8;">4</div>
<div class="t" style="left:44px;top:929px;font-size:10px;color:#a8a8a8;">0</div>
<div class="t" style="left:44px;top:939px;font-size:10px;color:#a8a8a8;">0</div>
<div class="a" style="left:54px;top:915px;width:3px;height:1px;background:#7a7a7a;"></div>
<div class="a" style="left:54px;top:924px;width:3px;height:1px;background:#7a7a7a;"></div>
<div class="a" style="left:54px;top:934px;width:3px;height:1px;background:#7a7a7a;"></div>
<div class="a" style="left:54px;top:943px;width:3px;height:1px;background:#7a7a7a;"></div>
<div class="a" style="left:41px;top:952px;width:16px;height:1px;background:#7a7a7a;"></div>
<div class="t" style="left:44px;top:956px;font-size:10px;color:#a8a8a8;">1</div>
<div class="t" style="left:44px;top:966px;font-size:10px;color:#a8a8a8;">5</div>
<div class="t" style="left:44px;top:976px;font-size:10px;color:#a8a8a8;">0</div>
<div class="t" style="left:44px;top:986px;font-size:10px;color:#a8a8a8;">0</div>
<div class="a" style="left:54px;top:962px;width:3px;height:1px;background:#7a7a7a;"></div>
<div class="a" style="left:54px;top:971px;width:3px;height:1px;background:#7a7a7a;"></div>
<div class="a" style="left:54px;top:981px;width:3px;height:1px;background:#7a7a7a;"></div>
<div class="a" style="left:54px;top:990px;width:3px;height:1px;background:#7a7a7a;"></div>
<div class="a" style="left:41px;top:1000px;width:16px;height:1px;background:#7a7a7a;"></div>
<div class="t" style="left:44px;top:1004px;font-size:10px;color:#a8a8a8;">1</div>
<div class="t" style="left:44px;top:1014px;font-size:10px;color:#a8a8a8;">6</div>
<div class="t" style="left:44px;top:1024px;font-size:10px;color:#a8a8a8;">0</div>
<div class="t" style="left:44px;top:1034px;font-size:10px;color:#a8a8a8;">0</div>
<div class="a" style="left:54px;top:1009px;width:3px;height:1px;background:#7a7a7a;"></div>
<div class="a" style="left:54px;top:1019px;width:3px;height:1px;background:#7a7a7a;"></div>
<div class="a" style="left:54px;top:1028px;width:3px;height:1px;background:#7a7a7a;"></div>
<div class="a" style="left:54px;top:1038px;width:3px;height:1px;background:#7a7a7a;"></div>
<div class="a" style="left:41px;top:1047px;width:16px;height:1px;background:#7a7a7a;"></div>
<div class="t" style="left:44px;top:1051px;font-size:10px;color:#a8a8a8;">1</div>
<div class="a" style="left:54px;top:1057px;width:3px;height:1px;background:#7a7a7a;"></div>
<div class="a" style="left:43px;top:103px;width:1px;height:1px;background:#707070;"></div>
<div class="a" style="left:53px;top:93px;width:1px;height:1px;background:#707070;"></div>
<div class="a" style="left:46px;top:103px;width:1px;height:1px;background:#707070;"></div>
<div class="a" style="left:53px;top:96px;width:1px;height:1px;background:#707070;"></div>
<div class="a" style="left:49px;top:103px;width:1px;height:1px;background:#707070;"></div>
<div class="a" style="left:53px;top:99px;width:1px;height:1px;background:#707070;"></div>
<div class="a" style="left:52px;top:103px;width:1px;height:1px;background:#707070;"></div>
<div class="a" style="left:53px;top:102px;width:1px;height:1px;background:#707070;"></div>
<div class="a" style="left:55px;top:103px;width:1px;height:1px;background:#707070;"></div>
<div class="a" style="left:53px;top:105px;width:1px;height:1px;background:#707070;"></div>
<div class="a" style="left:1565px;top:91px;width:16px;height:16px;background:#4a4a4a;"></div>
<div class="a" style="left:1565px;top:107px;width:16px;height:955px;background:#4a4a4a;"></div>
<div class="a" style="left:41px;top:1062px;width:1540px;height:16px;background:#4a4a4a;"></div>
<div class="a" style="left:1565px;top:1062px;width:16px;height:16px;background:#535353;"></div>
<div class="a" style="left:1322px;top:92px;width:1px;height:1px;background:#e8e8e8;"></div>
<div class="a" style="left:42px;top:578px;width:1px;height:1px;background:#e8e8e8;"></div>
<div class="a" style="left:1322px;top:94px;width:1px;height:1px;background:#e8e8e8;"></div>
<div class="a" style="left:44px;top:578px;width:1px;height:1px;background:#d8f000;"></div>
<div class="a" style="left:1322px;top:96px;width:1px;height:1px;background:#e8e8e8;"></div>
<div class="a" style="left:46px;top:578px;width:1px;height:1px;background:#e8e8e8;"></div>
<div class="a" style="left:1322px;top:98px;width:1px;height:1px;background:#e8e8e8;"></div>
<div class="a" style="left:48px;top:578px;width:1px;height:1px;background:#e8e8e8;"></div>
<div class="a" style="left:1322px;top:100px;width:1px;height:1px;background:#e8e8e8;"></div>
<div class="a" style="left:50px;top:578px;width:1px;height:1px;background:#e8e8e8;"></div>
<div class="a" style="left:1322px;top:102px;width:1px;height:1px;background:#e8e8e8;"></div>
<div class="a" style="left:52px;top:578px;width:1px;height:1px;background:#e8e8e8;"></div>
<div class="a" style="left:1322px;top:104px;width:1px;height:1px;background:#e8e8e8;"></div>
<div class="a" style="left:54px;top:578px;width:1px;height:1px;background:#e8e8e8;"></div>
<div class="a" style="left:1322px;top:106px;width:1px;height:1px;background:#e8e8e8;"></div>
<div class="a" style="left:56px;top:578px;width:1px;height:1px;background:#e8e8e8;"></div>
<div class="t" style="left:46px;top:1065px;font-size:11px;color:#e6e6e6;--w:37;">16.67%</div>
<div class="a" style="left:88px;top:1062px;width:1px;height:16px;background:#3c3c3c;"></div>
<div class="t" style="left:118px;top:1065px;font-size:11px;color:#cfcfcf;--w:112;">ファイル：48.0M/56.0M</div>
<svg style="left:262px;top:1065px" width="6" height="10"><path d="M0.5 0.5L5 5L0.5 9.5" fill="none" stroke="#bdbdbd" stroke-width="1"/></svg>
<div class="a" style="left:272px;top:1062px;width:1px;height:16px;background:#3c3c3c;"></div>
<svg style="left:470px;top:243px" width="683" height="683" viewBox="0 0 683 683"><defs><linearGradient id="skin" x1="0" y1="0" x2="0" y2="1"><stop offset="0" stop-color="#c39686"/><stop offset="0.4" stop-color="#b98978"/><stop offset="0.6" stop-color="#ab7c6a"/><stop offset="1" stop-color="#a67866"/></linearGradient></defs><rect x="0" y="0" width="683" height="683" fill="#060606"/><g transform="translate(1.50,1.50) scale(0.985)"><rect x="0" y="0" width="170.7" height="170.7" fill="#775646"/><g transform="scale(0.158)"><path d="M40,57 L88,22 L108,35 L150,60 L220,65 L222,100 L245,150 L280,192 L300,200 L320,190 L360,160 L375,115 L380,55 L430,35 L455,12 L625,12 L650,35 L700,55 L705,115 L720,160 L760,190 L780,200 L800,192 L835,150 L858,100 L860,65 L930,60 L972,35 L992,22 L1040,57 L1040,57 L980,125 L915,225 L840,325 L820,380 L855,450 L870,470 L935,600 L935,740 L925,840 L935,915 L920,990 L905,1040 L900,1060 L770,1060 L740,980 L700,900 L655,865 L590,800 L555,740 L540,715 L525,740 L490,800 L425,865 L380,900 L340,980 L310,1060 L180,1060 L175,1040 L160,990 L145,915 L155,840 L145,740 L145,600 L210,470 L225,450 L260,380 L240,325 L165,225 L100,125Z" fill="url(#skin)"/><ellipse cx="270" cy="760" rx="75" ry="130" fill="#b88a7a" opacity="0.3"/><ellipse cx="810" cy="760" rx="75" ry="130" fill="#b88a7a" opacity="0.3"/><ellipse cx="540" cy="230" rx="150" ry="120" fill="#c89c8c" opacity="0.35"/><path d="M7,310 L30,295 L70,255 L110,235 L165,250 L220,300 L245,350 L250,400 L200,500 L145,570 L120,630 L110,665 L50,662 L10,640Z" fill="#b98a7a"/><path d="M1073,310 L1050,295 L1010,255 L970,235 L915,250 L860,300 L835,350 L830,400 L880,500 L935,570 L960,630 L970,665 L1030,662 L1070,640Z" fill="#b98a7a"/><path d="M210,470 L300,500 L370,540 L450,565 L540,575 L630,565 L710,540 L780,500 L870,470 L935,600 L880,585 L780,560 L680,570 L605,605 L565,650 L540,715 L515,650 L475,605 L400,570 L300,560 L200,585 L145,600Z" fill="#d6cdbb"/><path d="M10,905 L50,910 L150,940 L155,990 L125,1040 L75,1060 L20,1030 L10,965Z" fill="#bf8c84"/><path d="M1070,905 L1030,910 L930,940 L925,990 L955,1040 L1005,1060 L1060,1030 L1070,965Z" fill="#bf8c84"/><path d="M335,990 L380,950 L450,970 L530,1010 L480,1060 L350,1030Z" fill="#bf8c84"/><path d="M745,990 L700,950 L630,970 L550,1010 L600,1060 L730,1030Z" fill="#bf8c84"/></g><ellipse cx="86" cy="30" rx="17" ry="14" fill="#e6d6d0" opacity="0.45"/><rect x="84" y="20" width="4" height="45" fill="#eadcd6" opacity="0.4"/></g><g transform="translate(172.17,1.50) scale(0.985)"><rect width="170.7" height="170.7" fill="#775646"/><polygon points="35.0,47.5 45.0,42.0 59.0,42.0 70.0,33.0 84.0,47.0 100.0,33.0 114.0,42.0 130.0,42.0 136.0,47.5 132.0,52.0 110.0,49.0 86.0,54.0 62.0,49.0 38.0,52.0" fill="#deb3a0"/><polygon points="23.0,94.0 34.0,75.0 59.0,84.0 86.0,91.0 115.0,84.0 138.0,75.0 149.0,94.0 125.0,87.0 100.0,93.0 89.0,100.0 86.0,112.0 80.0,100.0 70.0,93.0 46.0,87.0" fill="#e9e3d5"/></g><g transform="translate(342.84,1.50) scale(0.985)"><rect width="170.7" height="170.7" fill="#775646"/><polygon points="35.0,47.5 45.0,42.0 59.0,42.0 68.0,33.0 84.0,47.0 100.0,33.0 111.0,42.0 126.0,42.0 134.0,47.5 127.0,57.0 140.0,78.0 148.0,94.0 125.0,87.0 100.0,93.0 89.0,100.0 86.0,112.0 80.0,100.0 70.0,93.0 46.0,87.0 23.0,94.0 31.0,78.0 44.0,57.0" fill="#e2bba8"/><polygon points="23.0,94.0 31.0,78.0 59.0,85.0 86.0,91.0 115.0,85.0 140.0,78.0 148.0,94.0 125.0,87.0 100.0,93.0 89.0,100.0 86.0,112.0 80.0,100.0 70.0,93.0 46.0,87.0" fill="#ebe4d6"/></g><g transform="translate(513.51,1.50) scale(0.985)"><rect x="0" y="0" width="170.7" height="170.7" fill="#775646"/><g transform="scale(0.158)"><path d="M40,57 L88,22 L108,35 L150,60 L220,65 L222,100 L245,150 L280,192 L300,200 L320,190 L360,160 L375,115 L380,55 L430,35 L455,12 L625,12 L650,35 L700,55 L705,115 L720,160 L760,190 L780,200 L800,192 L835,150 L858,100 L860,65 L930,60 L972,35 L992,22 L1040,57 L1040,57 L980,125 L915,225 L840,325 L820,380 L855,450 L870,470 L935,600 L935,740 L925,840 L935,915 L920,990 L905,1040 L900,1060 L770,1060 L740,980 L700,900 L655,865 L590,800 L555,740 L540,715 L525,740 L490,800 L425,865 L380,900 L340,980 L310,1060 L180,1060 L175,1040 L160,990 L145,915 L155,840 L145,740 L145,600 L210,470 L225,450 L260,380 L240,325 L165,225 L100,125Z" fill="url(#skin)"/><ellipse cx="270" cy="760" rx="75" ry="130" fill="#b88a7a" opacity="0.3"/><ellipse cx="810" cy="760" rx="75" ry="130" fill="#b88a7a" opacity="0.3"/><ellipse cx="540" cy="230" rx="150" ry="120" fill="#c89c8c" opacity="0.35"/><path d="M7,310 L30,295 L70,255 L110,235 L165,250 L220,300 L245,350 L250,400 L200,500 L145,570 L120,630 L110,665 L50,662 L10,640Z" fill="#b98a7a"/><path d="M1073,310 L1050,295 L1010,255 L970,235 L915,250 L860,300 L835,350 L830,400 L880,500 L935,570 L960,630 L970,665 L1030,662 L1070,640Z" fill="#b98a7a"/><path d="M210,470 L300,500 L370,540 L450,565 L540,575 L630,565 L710,540 L780,500 L870,470 L935,600 L880,585 L780,560 L680,570 L605,605 L565,650 L540,715 L515,650 L475,605 L400,570 L300,560 L200,585 L145,600Z" fill="#d6cdbb"/><path d="M430,268 L453,222 L483,270Z" fill="#ddd5c6"/><path d="M650,268 L627,222 L597,270Z" fill="#ddd5c6"/><path d="M10,905 L50,910 L150,940 L155,990 L125,1040 L75,1060 L20,1030 L10,965Z" fill="#bf8c84"/><path d="M1070,905 L1030,910 L930,940 L925,990 L955,1040 L1005,1060 L1060,1030 L1070,965Z" fill="#bf8c84"/><path d="M335,990 L380,950 L450,970 L530,1010 L480,1060 L350,1030Z" fill="#bf8c84"/><path d="M745,990 L700,950 L630,970 L550,1010 L600,1060 L730,1030Z" fill="#bf8c84"/></g><rect x="106" y="18" width="65" height="100" fill="#3a3629" opacity="0.72"/></g><g transform="translate(1.50,172.17) scale(0.985)"><rect width="170.7" height="170.7" fill="#404249"/><path id="arc" d="M32 90 Q86 56 148 95" fill="none"/><text font-family="Liberation Sans" font-size="19" fill="#0e0e0e" letter-spacing="1.6"><textPath href="#arc">EASY RIDE</textPath></text></g><g transform="translate(172.17,172.17) scale(0.985)"><rect x="0" y="0" width="170.7" height="170.7" fill="#775646"/><g transform="scale(0.158)"><path d="M40,57 L88,22 L108,35 L150,60 L220,65 L222,100 L245,150 L280,192 L300,200 L320,190 L360,160 L375,115 L380,55 L430,35 L455,12 L625,12 L650,35 L700,55 L705,115 L720,160 L760,190 L780,200 L800,192 L835,150 L858,100 L860,65 L930,60 L972,35 L992,22 L1040,57 L1040,57 L980,125 L915,225 L840,325 L820,380 L855,450 L870,470 L935,600 L935,740 L925,840 L935,915 L920,990 L905,1040 L900,1060 L770,1060 L740,980 L700,900 L655,865 L590,800 L555,740 L540,715 L525,740 L490,800 L425,865 L380,900 L340,980 L310,1060 L180,1060 L175,1040 L160,990 L145,915 L155,840 L145,740 L145,600 L210,470 L225,450 L260,380 L240,325 L165,225 L100,125Z" fill="url(#skin)"/><ellipse cx="270" cy="760" rx="75" ry="130" fill="#b88a7a" opacity="0.3"/><ellipse cx="810" cy="760" rx="75" ry="130" fill="#b88a7a" opacity="0.3"/><ellipse cx="540" cy="230" rx="150" ry="120" fill="#c89c8c" opacity="0.35"/><path d="M7,310 L30,295 L70,255 L110,235 L165,250 L220,300 L245,350 L250,400 L200,500 L145,570 L120,630 L110,665 L50,662 L10,640Z" fill="#b98a7a"/><path d="M1073,310 L1050,295 L1010,255 L970,235 L915,250 L860,300 L835,350 L830,400 L880,500 L935,570 L960,630 L970,665 L1030,662 L1070,640Z" fill="#b98a7a"/><path d="M210,470 L300,500 L370,540 L450,565 L540,575 L630,565 L710,540 L780,500 L870,470 L935,600 L880,585 L780,560 L680,570 L605,605 L565,650 L540,715 L515,650 L475,605 L400,570 L300,560 L200,585 L145,600Z" fill="#d6cdbb"/><path d="M430,268 L453,222 L483,270Z" fill="#ddd5c6"/><path d="M650,268 L627,222 L597,270Z" fill="#ddd5c6"/><path d="M10,905 L50,910 L150,940 L155,990 L125,1040 L75,1060 L20,1030 L10,965Z" fill="#bf8c84"/><path d="M1070,905 L1030,910 L930,940 L925,990 L955,1040 L1005,1060 L1060,1030 L1070,965Z" fill="#bf8c84"/><path d="M335,990 L380,950 L450,970 L530,1010 L480,1060 L350,1030Z" fill="#bf8c84"/><path d="M745,990 L700,950 L630,970 L550,1010 L600,1060 L730,1030Z" fill="#bf8c84"/></g><path d="M52 60 L62 62 M64 62 L76 63 M80 62 L92 64 M96 62 L110 64 M70 70 L90 72" stroke="#1a1410" stroke-width="1.3" opacity="0.85"/></g><g transform="translate(342.84,172.17) scale(0.985)"><rect x="0" y="0" width="170.7" height="170.7" fill="#775646"/><g transform="scale(0.158)"><path d="M40,57 L88,22 L108,35 L150,60 L220,65 L222,100 L245,150 L280,192 L300,200 L320,190 L360,160 L375,115 L380,55 L430,35 L455,12 L625,12 L650,35 L700,55 L705,115 L720,160 L760,190 L780,200 L800,192 L835,150 L858,100 L860,65 L930,60 L972,35 L992,22 L1040,57 L1040,57 L980,125 L915,225 L840,325 L820,380 L855,450 L870,470 L935,600 L935,740 L925,840 L935,915 L920,990 L905,1040 L900,1060 L770,1060 L740,980 L700,900 L655,865 L590,800 L555,740 L540,715 L525,740 L490,800 L425,865 L380,900 L340,980 L310,1060 L180,1060 L175,1040 L160,990 L145,915 L155,840 L145,740 L145,600 L210,470 L225,450 L260,380 L240,325 L165,225 L100,125Z" fill="url(#skin)"/><ellipse cx="270" cy="760" rx="75" ry="130" fill="#b88a7a" opacity="0.3"/><ellipse cx="810" cy="760" rx="75" ry="130" fill="#b88a7a" opacity="0.3"/><ellipse cx="540" cy="230" rx="150" ry="120" fill="#c89c8c" opacity="0.35"/><path d="M7,310 L30,295 L70,255 L110,235 L165,250 L220,300 L245,350 L250,400 L200,500 L145,570 L120,630 L110,665 L50,662 L10,640Z" fill="#b98a7a"/><path d="M1073,310 L1050,295 L1010,255 L970,235 L915,250 L860,300 L835,350 L830,400 L880,500 L935,570 L960,630 L970,665 L1030,662 L1070,640Z" fill="#b98a7a"/><path d="M210,470 L300,500 L370,540 L450,565 L540,575 L630,565 L710,540 L780,500 L870,470 L935,600 L880,585 L780,560 L680,570 L605,605 L565,650 L540,715 L515,650 L475,605 L400,570 L300,560 L200,585 L145,600Z" fill="#d6cdbb"/><path d="M430,268 L453,222 L483,270Z" fill="#ddd5c6"/><path d="M650,268 L627,222 L597,270Z" fill="#ddd5c6"/><path d="M10,905 L50,910 L150,940 L155,990 L125,1040 L75,1060 L20,1030 L10,965Z" fill="#bf8c84"/><path d="M1070,905 L1030,910 L930,940 L925,990 L955,1040 L1005,1060 L1060,1030 L1070,965Z" fill="#bf8c84"/><path d="M335,990 L380,950 L450,970 L530,1010 L480,1060 L350,1030Z" fill="#bf8c84"/><path d="M745,990 L700,950 L630,970 L550,1010 L600,1060 L730,1030Z" fill="#bf8c84"/></g><g transform="rotate(14 82.8 73)"><ellipse cx="82.8" cy="73" rx="13.5" ry="21.5" fill="none" stroke="#0a0a0a" stroke-width="3"/><line x1="97.0" y1="77.5" x2="102.9" y2="78.8" stroke="#0a0a0a" stroke-width="2.6" stroke-linecap="round"/><line x1="94.8" y1="85.6" x2="99.8" y2="89.2" stroke="#0a0a0a" stroke-width="2.6" stroke-linecap="round"/><line x1="90.8" y1="91.8" x2="94.1" y2="97.2" stroke="#0a0a0a" stroke-width="2.6" stroke-linecap="round"/><line x1="74.7" y1="91.7" x2="71.3" y2="97.1" stroke="#0a0a0a" stroke-width="2.6" stroke-linecap="round"/><line x1="70.7" y1="85.4" x2="65.7" y2="89.0" stroke="#0a0a0a" stroke-width="2.6" stroke-linecap="round"/><line x1="68.6" y1="77.3" x2="62.7" y2="78.6" stroke="#0a0a0a" stroke-width="2.6" stroke-linecap="round"/><line x1="68.6" y1="68.5" x2="62.7" y2="67.2" stroke="#0a0a0a" stroke-width="2.6" stroke-linecap="round"/><line x1="70.8" y1="60.4" x2="65.8" y2="56.8" stroke="#0a0a0a" stroke-width="2.6" stroke-linecap="round"/><line x1="74.8" y1="54.2" x2="71.5" y2="48.8" stroke="#0a0a0a" stroke-width="2.6" stroke-linecap="round"/><line x1="90.9" y1="54.3" x2="94.3" y2="48.9" stroke="#0a0a0a" stroke-width="2.6" stroke-linecap="round"/><line x1="94.9" y1="60.6" x2="99.9" y2="57.0" stroke="#0a0a0a" stroke-width="2.6" stroke-linecap="round"/><line x1="97.0" y1="68.7" x2="102.9" y2="67.4" stroke="#0a0a0a" stroke-width="2.6" stroke-linecap="round"/></g><line x1="88.5" y1="41" x2="74.3" y2="111.7" stroke="#0a0a0a" stroke-width="3"/><ellipse cx="82" cy="74" rx="5.5" ry="10.5" transform="rotate(22 82 74)" fill="none" stroke="#0a0a0a" stroke-width="2.6"/></g><g transform="translate(513.51,172.17) scale(0.985)"><rect width="170.7" height="170.7" fill="#7a7a78"/><path d="M69 38 Q70 17 86 18 Q103 22 106 52 L107 120 Q107 150 104 159 L72 159 Q66 120 67 80 Z" fill="#d9827b" stroke="#3a2224" stroke-width="0.8"/><path d="M69 38 Q70 17 86 18 Q103 22 106 52 L107 62 Q90 66 72 55 Z" fill="#d5707a"/></g><g transform="translate(1.50,342.84) scale(0.985)"><rect x="0" y="0" width="170.7" height="170.7" fill="#775646"/><g transform="scale(0.158)"><path d="M40,57 L88,22 L108,35 L150,60 L220,65 L222,100 L245,150 L280,192 L300,200 L320,190 L360,160 L375,115 L380,55 L430,35 L455,12 L625,12 L650,35 L700,55 L705,115 L720,160 L760,190 L780,200 L800,192 L835,150 L858,100 L860,65 L930,60 L972,35 L992,22 L1040,57 L1040,57 L980,125 L915,225 L840,325 L820,380 L855,450 L870,470 L935,600 L935,740 L925,840 L935,915 L920,990 L905,1040 L900,1060 L770,1060 L740,980 L700,900 L655,865 L590,800 L555,740 L540,715 L525,740 L490,800 L425,865 L380,900 L340,980 L310,1060 L180,1060 L175,1040 L160,990 L145,915 L155,840 L145,740 L145,600 L210,470 L225,450 L260,380 L240,325 L165,225 L100,125Z" fill="url(#skin)"/><ellipse cx="270" cy="760" rx="75" ry="130" fill="#b88a7a" opacity="0.3"/><ellipse cx="810" cy="760" rx="75" ry="130" fill="#b88a7a" opacity="0.3"/><ellipse cx="540" cy="230" rx="150" ry="120" fill="#c89c8c" opacity="0.35"/><path d="M7,310 L30,295 L70,255 L110,235 L165,250 L220,300 L245,350 L250,400 L200,500 L145,570 L120,630 L110,665 L50,662 L10,640Z" fill="#b98a7a"/><path d="M1073,310 L1050,295 L1010,255 L970,235 L915,250 L860,300 L835,350 L830,400 L880,500 L935,570 L960,630 L970,665 L1030,662 L1070,640Z" fill="#b98a7a"/><path d="M210,470 L300,500 L370,540 L450,565 L540,575 L630,565 L710,540 L780,500 L870,470 L935,600 L880,585 L780,560 L680,570 L605,605 L565,650 L540,715 L515,650 L475,605 L400,570 L300,560 L200,585 L145,600Z" fill="#d6cdbb"/><path d="M430,268 L453,222 L483,270Z" fill="#ddd5c6"/><path d="M650,268 L627,222 L597,270Z" fill="#ddd5c6"/><path d="M10,905 L50,910 L150,940 L155,990 L125,1040 L75,1060 L20,1030 L10,965Z" fill="#bf8c84"/><path d="M1070,905 L1030,910 L930,940 L925,990 L955,1040 L1005,1060 L1060,1030 L1070,965Z" fill="#bf8c84"/><path d="M335,990 L380,950 L450,970 L530,1010 L480,1060 L350,1030Z" fill="#bf8c84"/><path d="M745,990 L700,950 L630,970 L550,1010 L600,1060 L730,1030Z" fill="#bf8c84"/></g></g><g transform="translate(172.17,342.84) scale(0.985)"><rect x="0" y="0" width="170.7" height="170.7" fill="#775646"/><g transform="scale(0.158)"><path d="M40,57 L88,22 L108,35 L150,60 L220,65 L222,100 L245,150 L280,192 L300,200 L320,190 L360,160 L375,115 L380,55 L430,35 L455,12 L625,12 L650,35 L700,55 L705,115 L720,160 L760,190 L780,200 L800,192 L835,150 L858,100 L860,65 L930,60 L972,35 L992,22 L1040,57 L1040,57 L980,125 L915,225 L840,325 L820,380 L855,450 L870,470 L935,600 L935,740 L925,840 L935,915 L920,990 L905,1040 L900,1060 L770,1060 L740,980 L700,900 L655,865 L590,800 L555,740 L540,715 L525,740 L490,800 L425,865 L380,900 L340,980 L310,1060 L180,1060 L175,1040 L160,990 L145,915 L155,840 L145,740 L145,600 L210,470 L225,450 L260,380 L240,325 L165,225 L100,125Z" fill="url(#skin)"/><ellipse cx="270" cy="760" rx="75" ry="130" fill="#b88a7a" opacity="0.3"/><ellipse cx="810" cy="760" rx="75" ry="130" fill="#b88a7a" opacity="0.3"/><ellipse cx="540" cy="230" rx="150" ry="120" fill="#c89c8c" opacity="0.35"/><path d="M7,310 L30,295 L70,255 L110,235 L165,250 L220,300 L245,350 L250,400 L200,500 L145,570 L120,630 L110,665 L50,662 L10,640Z" fill="#b98a7a"/><path d="M1073,310 L1050,295 L1010,255 L970,235 L915,250 L860,300 L835,350 L830,400 L880,500 L935,570 L960,630 L970,665 L1030,662 L1070,640Z" fill="#b98a7a"/><path d="M210,470 L300,500 L370,540 L450,565 L540,575 L630,565 L710,540 L780,500 L870,470 L935,600 L880,585 L780,560 L680,570 L605,605 L565,650 L540,715 L515,650 L475,605 L400,570 L300,560 L200,585 L145,600Z" fill="#d6cdbb"/><path d="M430,268 L453,222 L483,270Z" fill="#ddd5c6"/><path d="M650,268 L627,222 L597,270Z" fill="#ddd5c6"/><path d="M10,905 L50,910 L150,940 L155,990 L125,1040 L75,1060 L20,1030 L10,965Z" fill="#bf8c84"/><path d="M1070,905 L1030,910 L930,940 L925,990 L955,1040 L1005,1060 L1060,1030 L1070,965Z" fill="#bf8c84"/><path d="M335,990 L380,950 L450,970 L530,1010 L480,1060 L350,1030Z" fill="#bf8c84"/><path d="M745,990 L700,950 L630,970 L550,1010 L600,1060 L730,1030Z" fill="#bf8c84"/></g></g><g transform="translate(342.84,342.84) scale(0.985)"><rect x="0" y="0" width="170.7" height="170.7" fill="#775646"/><g transform="scale(0.158)"><path d="M40,57 L88,22 L108,35 L150,60 L220,65 L222,100 L245,150 L280,192 L300,200 L320,190 L360,160 L375,115 L380,55 L430,35 L455,12 L625,12 L650,35 L700,55 L705,115 L720,160 L760,190 L780,200 L800,192 L835,150 L858,100 L860,65 L930,60 L972,35 L992,22 L1040,57 L1040,57 L980,125 L915,225 L840,325 L820,380 L855,450 L870,470 L935,600 L935,740 L925,840 L935,915 L920,990 L905,1040 L900,1060 L770,1060 L740,980 L700,900 L655,865 L590,800 L555,740 L540,715 L525,740 L490,800 L425,865 L380,900 L340,980 L310,1060 L180,1060 L175,1040 L160,990 L145,915 L155,840 L145,740 L145,600 L210,470 L225,450 L260,380 L240,325 L165,225 L100,125Z" fill="url(#skin)"/><ellipse cx="270" cy="760" rx="75" ry="130" fill="#b88a7a" opacity="0.3"/><ellipse cx="810" cy="760" rx="75" ry="130" fill="#b88a7a" opacity="0.3"/><ellipse cx="540" cy="230" rx="150" ry="120" fill="#c89c8c" opacity="0.35"/><path d="M7,310 L30,295 L70,255 L110,235 L165,250 L220,300 L245,350 L250,400 L200,500 L145,570 L120,630 L110,665 L50,662 L10,640Z" fill="#b98a7a"/><path d="M1073,310 L1050,295 L1010,255 L970,235 L915,250 L860,300 L835,350 L830,400 L880,500 L935,570 L960,630 L970,665 L1030,662 L1070,640Z" fill="#b98a7a"/><path d="M210,470 L300,500 L370,540 L450,565 L540,575 L630,565 L710,540 L780,500 L870,470 L935,600 L880,585 L780,560 L680,570 L605,605 L565,650 L540,715 L515,650 L475,605 L400,570 L300,560 L200,585 L145,600Z" fill="#d6cdbb"/><path d="M430,268 L453,222 L483,270Z" fill="#ddd5c6"/><path d="M650,268 L627,222 L597,270Z" fill="#ddd5c6"/><path d="M10,905 L50,910 L150,940 L155,990 L125,1040 L75,1060 L20,1030 L10,965Z" fill="#bf8c84"/><path d="M1070,905 L1030,910 L930,940 L925,990 L955,1040 L1005,1060 L1060,1030 L1070,965Z" fill="#bf8c84"/><path d="M335,990 L380,950 L450,970 L530,1010 L480,1060 L350,1030Z" fill="#bf8c84"/><path d="M745,990 L700,950 L630,970 L550,1010 L600,1060 L730,1030Z" fill="#bf8c84"/></g></g><g transform="translate(513.51,342.84) scale(0.985)"><rect x="0" y="0" width="170.7" height="170.7" fill="#775646"/><g transform="scale(0.158)"><path d="M40,57 L88,22 L108,35 L150,60 L220,65 L222,100 L245,150 L280,192 L300,200 L320,190 L360,160 L375,115 L380,55 L430,35 L455,12 L625,12 L650,35 L700,55 L705,115 L720,160 L760,190 L780,200 L800,192 L835,150 L858,100 L860,65 L930,60 L972,35 L992,22 L1040,57 L1040,57 L980,125 L915,225 L840,325 L820,380 L855,450 L870,470 L935,600 L935,740 L925,840 L935,915 L920,990 L905,1040 L900,1060 L770,1060 L740,980 L700,900 L655,865 L590,800 L555,740 L540,715 L525,740 L490,800 L425,865 L380,900 L340,980 L310,1060 L180,1060 L175,1040 L160,990 L145,915 L155,840 L145,740 L145,600 L210,470 L225,450 L260,380 L240,325 L165,225 L100,125Z" fill="url(#skin)"/><ellipse cx="270" cy="760" rx="75" ry="130" fill="#b88a7a" opacity="0.3"/><ellipse cx="810" cy="760" rx="75" ry="130" fill="#b88a7a" opacity="0.3"/><ellipse cx="540" cy="230" rx="150" ry="120" fill="#c89c8c" opacity="0.35"/><path d="M7,310 L30,295 L70,255 L110,235 L165,250 L220,300 L245,350 L250,400 L200,500 L145,570 L120,630 L110,665 L50,662 L10,640Z" fill="#b98a7a"/><path d="M1073,310 L1050,295 L1010,255 L970,235 L915,250 L860,300 L835,350 L830,400 L880,500 L935,570 L960,630 L970,665 L1030,662 L1070,640Z" fill="#b98a7a"/><path d="M210,470 L300,500 L370,540 L450,565 L540,575 L630,565 L710,540 L780,500 L870,470 L935,600 L880,585 L780,560 L680,570 L605,605 L565,650 L540,715 L515,650 L475,605 L400,570 L300,560 L200,585 L145,600Z" fill="#d6cdbb"/><path d="M430,268 L453,222 L483,270Z" fill="#ddd5c6"/><path d="M650,268 L627,222 L597,270Z" fill="#ddd5c6"/><path d="M10,905 L50,910 L150,940 L155,990 L125,1040 L75,1060 L20,1030 L10,965Z" fill="#bf8c84"/><path d="M1070,905 L1030,910 L930,940 L925,990 L955,1040 L1005,1060 L1060,1030 L1070,965Z" fill="#bf8c84"/><path d="M335,990 L380,950 L450,970 L530,1010 L480,1060 L350,1030Z" fill="#bf8c84"/><path d="M745,990 L700,950 L630,970 L550,1010 L600,1060 L730,1030Z" fill="#bf8c84"/></g></g><g transform="translate(1.50,513.51) scale(0.985)"><rect x="0" y="0" width="170.7" height="170.7" fill="#775646"/><g transform="scale(0.158)"><path d="M40,57 L88,22 L108,35 L150,60 L220,65 L222,100 L245,150 L280,192 L300,200 L320,190 L360,160 L375,115 L380,55 L430,35 L455,12 L625,12 L650,35 L700,55 L705,115 L720,160 L760,190 L780,200 L800,192 L835,150 L858,100 L860,65 L930,60 L972,35 L992,22 L1040,57 L1040,57 L980,125 L915,225 L840,325 L820,380 L855,450 L870,470 L935,600 L935,740 L925,840 L935,915 L920,990 L905,1040 L900,1060 L770,1060 L740,980 L700,900 L655,865 L590,800 L555,740 L540,715 L525,740 L490,800 L425,865 L380,900 L340,980 L310,1060 L180,1060 L175,1040 L160,990 L145,915 L155,840 L145,740 L145,600 L210,470 L225,450 L260,380 L240,325 L165,225 L100,125Z" fill="url(#skin)"/><ellipse cx="270" cy="760" rx="75" ry="130" fill="#b88a7a" opacity="0.3"/><ellipse cx="810" cy="760" rx="75" ry="130" fill="#b88a7a" opacity="0.3"/><ellipse cx="540" cy="230" rx="150" ry="120" fill="#c89c8c" opacity="0.35"/><path d="M7,310 L30,295 L70,255 L110,235 L165,250 L220,300 L245,350 L250,400 L200,500 L145,570 L120,630 L110,665 L50,662 L10,640Z" fill="#b98a7a"/><path d="M1073,310 L1050,295 L1010,255 L970,235 L915,250 L860,300 L835,350 L830,400 L880,500 L935,570 L960,630 L970,665 L1030,662 L1070,640Z" fill="#b98a7a"/><path d="M210,470 L300,500 L370,540 L450,565 L540,575 L630,565 L710,540 L780,500 L870,470 L935,600 L880,585 L780,560 L680,570 L605,605 L565,650 L540,715 L515,650 L475,605 L400,570 L300,560 L200,585 L145,600Z" fill="#d6cdbb"/><path d="M430,268 L453,222 L483,270Z" fill="#ddd5c6"/><path d="M650,268 L627,222 L597,270Z" fill="#ddd5c6"/><path d="M10,905 L50,910 L150,940 L155,990 L125,1040 L75,1060 L20,1030 L10,965Z" fill="#bf8c84"/><path d="M1070,905 L1030,910 L930,940 L925,990 L955,1040 L1005,1060 L1060,1030 L1070,965Z" fill="#bf8c84"/><path d="M335,990 L380,950 L450,970 L530,1010 L480,1060 L350,1030Z" fill="#bf8c84"/><path d="M745,990 L700,950 L630,970 L550,1010 L600,1060 L730,1030Z" fill="#bf8c84"/></g></g><g transform="translate(172.17,513.51) scale(0.985)"><rect x="0" y="0" width="170.7" height="170.7" fill="#775646"/><g transform="scale(0.158)"><path d="M40,57 L88,22 L108,35 L150,60 L220,65 L222,100 L245,150 L280,192 L300,200 L320,190 L360,160 L375,115 L380,55 L430,35 L455,12 L625,12 L650,35 L700,55 L705,115 L720,160 L760,190 L780,200 L800,192 L835,150 L858,100 L860,65 L930,60 L972,35 L992,22 L1040,57 L1040,57 L980,125 L915,225 L840,325 L820,380 L855,450 L870,470 L935,600 L935,740 L925,840 L935,915 L920,990 L905,1040 L900,1060 L770,1060 L740,980 L700,900 L655,865 L590,800 L555,740 L540,715 L525,740 L490,800 L425,865 L380,900 L340,980 L310,1060 L180,1060 L175,1040 L160,990 L145,915 L155,840 L145,740 L145,600 L210,470 L225,450 L260,380 L240,325 L165,225 L100,125Z" fill="url(#skin)"/><ellipse cx="270" cy="760" rx="75" ry="130" fill="#b88a7a" opacity="0.3"/><ellipse cx="810" cy="760" rx="75" ry="130" fill="#b88a7a" opacity="0.3"/><ellipse cx="540" cy="230" rx="150" ry="120" fill="#c89c8c" opacity="0.35"/><path d="M7,310 L30,295 L70,255 L110,235 L165,250 L220,300 L245,350 L250,400 L200,500 L145,570 L120,630 L110,665 L50,662 L10,640Z" fill="#b98a7a"/><path d="M1073,310 L1050,295 L1010,255 L970,235 L915,250 L860,300 L835,350 L830,400 L880,500 L935,570 L960,630 L970,665 L1030,662 L1070,640Z" fill="#b98a7a"/><path d="M210,470 L300,500 L370,540 L450,565 L540,575 L630,565 L710,540 L780,500 L870,470 L935,600 L880,585 L780,560 L680,570 L605,605 L565,650 L540,715 L515,650 L475,605 L400,570 L300,560 L200,585 L145,600Z" fill="#d6cdbb"/><path d="M430,268 L453,222 L483,270Z" fill="#ddd5c6"/><path d="M650,268 L627,222 L597,270Z" fill="#ddd5c6"/><path d="M10,905 L50,910 L150,940 L155,990 L125,1040 L75,1060 L20,1030 L10,965Z" fill="#bf8c84"/><path d="M1070,905 L1030,910 L930,940 L925,990 L955,1040 L1005,1060 L1060,1030 L1070,965Z" fill="#bf8c84"/><path d="M335,990 L380,950 L450,970 L530,1010 L480,1060 L350,1030Z" fill="#bf8c84"/><path d="M745,990 L700,950 L630,970 L550,1010 L600,1060 L730,1030Z" fill="#bf8c84"/></g></g><g transform="translate(342.84,513.51) scale(0.985)"><rect x="0" y="0" width="170.7" height="170.7" fill="#775646"/><g transform="scale(0.158)"><path d="M40,57 L88,22 L108,35 L150,60 L220,65 L222,100 L245,150 L280,192 L300,200 L320,190 L360,160 L375,115 L380,55 L430,35 L455,12 L625,12 L650,35 L700,55 L705,115 L720,160 L760,190 L780,200 L800,192 L835,150 L858,100 L860,65 L930,60 L972,35 L992,22 L1040,57 L1040,57 L980,125 L915,225 L840,325 L820,380 L855,450 L870,470 L935,600 L935,740 L925,840 L935,915 L920,990 L905,1040 L900,1060 L770,1060 L740,980 L700,900 L655,865 L590,800 L555,740 L540,715 L525,740 L490,800 L425,865 L380,900 L340,980 L310,1060 L180,1060 L175,1040 L160,990 L145,915 L155,840 L145,740 L145,600 L210,470 L225,450 L260,380 L240,325 L165,225 L100,125Z" fill="url(#skin)"/><ellipse cx="270" cy="760" rx="75" ry="130" fill="#b88a7a" opacity="0.3"/><ellipse cx="810" cy="760" rx="75" ry="130" fill="#b88a7a" opacity="0.3"/><ellipse cx="540" cy="230" rx="150" ry="120" fill="#c89c8c" opacity="0.35"/><path d="M7,310 L30,295 L70,255 L110,235 L165,250 L220,300 L245,350 L250,400 L200,500 L145,570 L120,630 L110,665 L50,662 L10,640Z" fill="#b98a7a"/><path d="M1073,310 L1050,295 L1010,255 L970,235 L915,250 L860,300 L835,350 L830,400 L880,500 L935,570 L960,630 L970,665 L1030,662 L1070,640Z" fill="#b98a7a"/><path d="M210,470 L300,500 L370,540 L450,565 L540,575 L630,565 L710,540 L780,500 L870,470 L935,600 L880,585 L780,560 L680,570 L605,605 L565,650 L540,715 L515,650 L475,605 L400,570 L300,560 L200,585 L145,600Z" fill="#d6cdbb"/><path d="M430,268 L453,222 L483,270Z" fill="#ddd5c6"/><path d="M650,268 L627,222 L597,270Z" fill="#ddd5c6"/><path d="M10,905 L50,910 L150,940 L155,990 L125,1040 L75,1060 L20,1030 L10,965Z" fill="#bf8c84"/><path d="M1070,905 L1030,910 L930,940 L925,990 L955,1040 L1005,1060 L1060,1030 L1070,965Z" fill="#bf8c84"/><path d="M335,990 L380,950 L450,970 L530,1010 L480,1060 L350,1030Z" fill="#bf8c84"/><path d="M745,990 L700,950 L630,970 L550,1010 L600,1060 L730,1030Z" fill="#bf8c84"/></g></g><g transform="translate(513.51,513.51) scale(0.985)"><rect x="0" y="0" width="170.7" height="170.7" fill="#775646"/><g transform="scale(0.158)"><path d="M40,57 L88,22 L108,35 L150,60 L220,65 L222,100 L245,150 L280,192 L300,200 L320,190 L360,160 L375,115 L380,55 L430,35 L455,12 L625,12 L650,35 L700,55 L705,115 L720,160 L760,190 L780,200 L800,192 L835,150 L858,100 L860,65 L930,60 L972,35 L992,22 L1040,57 L1040,57 L980,125 L915,225 L840,325 L820,380 L855,450 L870,470 L935,600 L935,740 L925,840 L935,915 L920,990 L905,1040 L900,1060 L770,1060 L740,980 L700,900 L655,865 L590,800 L555,740 L540,715 L525,740 L490,800 L425,865 L380,900 L340,980 L310,1060 L180,1060 L175,1040 L160,990 L145,915 L155,840 L145,740 L145,600 L210,470 L225,450 L260,380 L240,325 L165,225 L100,125Z" fill="url(#skin)"/><ellipse cx="270" cy="760" rx="75" ry="130" fill="#b88a7a" opacity="0.3"/><ellipse cx="810" cy="760" rx="75" ry="130" fill="#b88a7a" opacity="0.3"/><ellipse cx="540" cy="230" rx="150" ry="120" fill="#c89c8c" opacity="0.35"/><path d="M7,310 L30,295 L70,255 L110,235 L165,250 L220,300 L245,350 L250,400 L200,500 L145,570 L120,630 L110,665 L50,662 L10,640Z" fill="#b98a7a"/><path d="M1073,310 L1050,295 L1010,255 L970,235 L915,250 L860,300 L835,350 L830,400 L880,500 L935,570 L960,630 L970,665 L1030,662 L1070,640Z" fill="#b98a7a"/><path d="M210,470 L300,500 L370,540 L450,565 L540,575 L630,565 L710,540 L780,500 L870,470 L935,600 L880,585 L780,560 L680,570 L605,605 L565,650 L540,715 L515,650 L475,605 L400,570 L300,560 L200,585 L145,600Z" fill="#d6cdbb"/><path d="M430,268 L453,222 L483,270Z" fill="#ddd5c6"/><path d="M650,268 L627,222 L597,270Z" fill="#ddd5c6"/><path d="M10,905 L50,910 L150,940 L155,990 L125,1040 L75,1060 L20,1030 L10,965Z" fill="#bf8c84"/><path d="M1070,905 L1030,910 L930,940 L925,990 L955,1040 L1005,1060 L1060,1030 L1070,965Z" fill="#bf8c84"/><path d="M335,990 L380,950 L450,970 L530,1010 L480,1060 L350,1030Z" fill="#bf8c84"/><path d="M745,990 L700,950 L630,970 L550,1010 L600,1060 L730,1030Z" fill="#bf8c84"/></g></g></svg>
<div class="a" style="left:10px;top:77px;width:1px;height:4px;background:#3e3e3e"></div><div class="a" style="left:12px;top:77px;width:1px;height:4px;background:#3e3e3e"></div><div class="a" style="left:14px;top:77px;width:1px;height:4px;background:#3e3e3e"></div><div class="a" style="left:16px;top:77px;width:1px;height:4px;background:#3e3e3e"></div><div class="a" style="left:18px;top:77px;width:1px;height:4px;background:#3e3e3e"></div><div class="a" style="left:20px;top:77px;width:1px;height:4px;background:#3e3e3e"></div><div class="a" style="left:22px;top:77px;width:1px;height:4px;background:#3e3e3e"></div><div class="a" style="left:24px;top:77px;width:1px;height:4px;background:#3e3e3e"></div><div class="a" style="left:26px;top:77px;width:1px;height:4px;background:#3e3e3e"></div><div class="a" style="left:28px;top:77px;width:1px;height:4px;background:#3e3e3e"></div><div class="a" style="left:4px;top:117px;width:31px;height:24px;background:#383838;border:1px solid #333;border-radius:3px"></div><div class="a" style="left:14px;top:667px;width:19px;height:19px;background:#000;border:1px solid #ececec"></div><div class="a" style="left:5px;top:658px;width:18px;height:18px;background:#775646;border:1px solid #ececec"></div><svg style="left:0;top:0" width="40" height="760" viewBox="0 0 40 760"><path d="M18.7 97V110 M11.5 103.3H26" stroke="#dcdcdc" stroke-width="1.8"/><path d="M18.7 95.5L21.6 99H15.8Z M18.7 111.5L21.6 108H15.8Z M10.5 103.3L14 100.4V106.2Z M27 103.3L23.5 100.4V106.2Z" fill="#dcdcdc"/><rect x="11.5" y="122" width="15.5" height="12" fill="none" stroke="#dcdcdc" stroke-width="1.4" stroke-dasharray="3.5 2.2"/><path d="M11 149 L17.5 156 L24 152 M17.5 156 L12 163 M17.5 156 L25.5 161" stroke="#dcdcdc" stroke-width="1.3" fill="none"/><path d="M19.5 148.5 A3.6 3.6 0 1 1 19.5 155.5" stroke="#dcdcdc" stroke-width="2.6" fill="none"/><circle cx="17.5" cy="158" r="1.6" fill="none" stroke="#dcdcdc" stroke-width="1"/><ellipse cx="13.5" cy="181.5" rx="3.8" ry="6.3" fill="none" stroke="#dcdcdc" stroke-width="1.3" stroke-dasharray="1.2 1.4"/><path d="M27.5 174.5 L20 182 M19.5 181.5 Q16 182 15.5 186 Q15 188 14 188.5 Q19.5 189 21 185.5 Q21.5 184 21.5 183.5Z" stroke="#dcdcdc" stroke-width="2.2" fill="#dcdcdc"/><path d="M9 202H24V213.5 M13 198.5V210H27.5" stroke="#dcdcdc" stroke-width="2" fill="none"/><path d="M25.5 226 Q27.5 228 25 230.5 L23 232.5 L19.5 229 L21.5 227 Q24 224 25.5 226Z" fill="#dcdcdc"/><path d="M17.5 228.5 L23.5 234.5" stroke="#dcdcdc" stroke-width="2"/><path d="M20.5 232 L13 239.5 Q11.5 241.5 13 242 Q14 242 15.5 240.5 L22.5 233.5" stroke="#dcdcdc" stroke-width="1.6" fill="none"/><g transform="rotate(-45 19 259)"><rect x="7" y="255" width="24" height="8" rx="1.5" fill="#dcdcdc"/><rect x="15" y="255" width="8" height="8" fill="#535353"/><rect x="15.6" y="255.6" width="6.8" height="6.8" fill="none" stroke="#dcdcdc" stroke-width="1.2"/><circle cx="19" cy="257.3" r="0.9" fill="#dcdcdc"/><circle cx="19" cy="260.7" r="0.9" fill="#dcdcdc"/><circle cx="17.3" cy="259" r="0.9" fill="#dcdcdc"/><circle cx="20.7" cy="259" r="0.9" fill="#dcdcdc"/></g><path d="M10 258.5 A4.5 4.5 0 0 1 17.5 252.5" stroke="#dcdcdc" stroke-width="1" stroke-dasharray="1 1.2" fill="none"/><path d="M26 277.8 L17 287.5" stroke="#dcdcdc" stroke-width="2.6" stroke-linecap="round"/><path d="M17.5 286.5 Q14 285.5 12.5 289 Q12 291.5 11 293.2 Q16 293.5 18 290.5 Q19.2 288.5 18.5 287.5Z" fill="#dcdcdc"/><circle cx="19.4" cy="307" r="3.3" fill="#dcdcdc"/><path d="M18.4 309.5H20.4V312.5H18.4Z" fill="#dcdcdc"/><rect x="13" y="312.5" width="13" height="4.2" rx="1" fill="#dcdcdc"/><rect x="14" y="317.8" width="11" height="1.2" fill="#dcdcdc"/><path d="M26.7 330 L18.5 338.5" stroke="#dcdcdc" stroke-width="2.6" stroke-linecap="round"/><path d="M18.8 337.5 Q15.5 336.8 14 339.8 Q13.5 342.5 12.2 344.8 Q17 344.8 19 341.8 Q20 340 19.5 338.5Z" fill="#dcdcdc"/><path d="M13 335.2 Q16 332 20.7 332.2" stroke="#dcdcdc" stroke-width="1.2" fill="none"/><path d="M9.8 335.6 L14.5 333 L14.5 337.2Z" fill="#dcdcdc"/><circle cx="22.2" cy="342.2" r="0.6" fill="#dcdcdc"/><circle cx="24.4" cy="340" r="0.6" fill="#dcdcdc"/><circle cx="25.6" cy="338" r="0.6" fill="#dcdcdc"/><circle cx="25.6" cy="335.9" r="0.6" fill="#dcdcdc"/><path d="M17 361.2 L22.2 356.3 L26.3 360.4 L21 365.4Z" fill="#dcdcdc"/><path d="M17 361.2 L11.9 366.3 L15.9 370.2 L21 365.4" fill="none" stroke="#dcdcdc" stroke-width="1.2"/><path d="M15.9 369.8 H27" stroke="#dcdcdc" stroke-width="1.2"/><path d="M11.1 390 L19.3 382.2 L25.9 388.5 L17.8 396.7Z" fill="none" stroke="#dcdcdc" stroke-width="1.2"/><path d="M15.2 381.5 Q16 379 18 380.5 Q20 382 19.8 387" stroke="#dcdcdc" stroke-width="1.1" fill="none"/><circle cx="19.7" cy="387.8" r="1.2" fill="#dcdcdc"/><path d="M26.7 390.8 Q28.5 393 28.2 394 A1.6 1.6 0 0 1 25.2 394 Q25 393 26.7 390.8Z" fill="#dcdcdc"/><path d="M14.5 409 Q18 407.5 24.5 408 Q26.5 409 26 413 Q25 416 22 416.5 Q21 415 23 412 Q21 412.5 17 418 L14.5 422 Q13 423 12.8 421.8 L17.5 413.5 Q14.5 414 14 412Z" fill="#dcdcdc"/><circle cx="20.7" cy="439.3" r="5.2" fill="#dcdcdc"/><path d="M17 443.3 L11.3 448.5" stroke="#dcdcdc" stroke-width="1.8" stroke-linecap="round"/><path d="M14.5 465V461.2H25.3V465 M19.9 461.2V473 M16.8 473H23" stroke="#dcdcdc" stroke-width="2.2" fill="none"/><path d="M12.5 499.5 Q13 494 16 491.5 L22 490 L24.5 492.5 L23 498.5 Q20.5 501.5 15 502 Z" fill="none" stroke="#dcdcdc" stroke-width="1.2"/><path d="M21.5 489.3 L23 487 L27.2 491.2 L25 492.7Z" fill="#dcdcdc" stroke="#dcdcdc" stroke-width="1"/><circle cx="18.8" cy="494.2" r="1.2" fill="#dcdcdc"/><path d="M13 501.5 L18.8 494.2" stroke="#dcdcdc" stroke-width="0.9"/><path d="M15.2 511.5 L24.8 520.7 L21 521 L22.8 526.2 L21.3 527 L19 521.8 L15.2 525.2 Z" fill="#111" stroke="#dcdcdc" stroke-width="1.1"/><path d="M13 550.5 Q9.5 549 11.5 545.5 L15.5 542 Q13.5 538.5 17 538 Q20 537.5 21.5 541 Q25 539.5 27 541.5 Q28 544 24.5 545.5 Q26.5 550 23 551 Q20.5 551.5 19 548 Q16 552 13 550.5Z" fill="#666" stroke="#dcdcdc" stroke-width="1.1"/><path d="M21.5 565.5 L26.7 571 L21.5 577.8Z" fill="#dcdcdc"/><path d="M12 573 Q11 570.5 13 571 L14.5 573 L14.5 568.5 Q15.5 567 16.3 568.5 L16.5 572 L16.6 567.7 Q17.5 566.5 18.3 567.8 L18.5 572 L18.7 568.5 Q19.6 567.5 20.4 568.8 L20.6 574 Q21 578.8 16.5 579 Q13.5 579 12 573Z" fill="#dcdcdc" stroke="#535353" stroke-width="0.5"/><path d="M14 566 Q19 561 25.5 565" stroke="#dcdcdc" stroke-width="1" fill="none"/><path d="M24.2 563 L28.2 565.6 L24.2 567Z" fill="#dcdcdc"/><circle cx="17" cy="594.8" r="5.5" fill="none" stroke="#dcdcdc" stroke-width="1.3"/><path d="M21.2 599 L25.8 603.8" stroke="#dcdcdc" stroke-width="2.4" stroke-linecap="round"/><circle cx="13" cy="623" r="2" fill="#dcdcdc"/><circle cx="18.9" cy="623" r="2" fill="#dcdcdc"/><circle cx="24.8" cy="623" r="2" fill="#dcdcdc"/><path d="M29 137H32.5V133.5Z" fill="#b4b4b4"/><path d="M29 164H32.5V160.5Z" fill="#b4b4b4"/><path d="M29 190H32.5V186.5Z" fill="#b4b4b4"/><path d="M29 216H32.5V212.5Z" fill="#b4b4b4"/><path d="M29 242H32.5V238.5Z" fill="#b4b4b4"/><path d="M29 268H32.5V264.5Z" fill="#b4b4b4"/><path d="M29 294H32.5V290.5Z" fill="#b4b4b4"/><path d="M29 320H32.5V316.5Z" fill="#b4b4b4"/><path d="M29 346H32.5V342.5Z" fill="#b4b4b4"/><path d="M29 372H32.5V368.5Z" fill="#b4b4b4"/><path d="M29 398H32.5V394.5Z" fill="#b4b4b4"/><path d="M29 424H32.5V420.5Z" fill="#b4b4b4"/><path d="M29 450H32.5V446.5Z" fill="#b4b4b4"/><path d="M29 476H32.5V472.5Z" fill="#b4b4b4"/><path d="M29 502H32.5V498.5Z" fill="#b4b4b4"/><path d="M29 528H32.5V524.5Z" fill="#b4b4b4"/><path d="M29 554H32.5V550.5Z" fill="#b4b4b4"/><path d="M29 580H32.5V576.5Z" fill="#b4b4b4"/><path d="M29 632H32.5V628.5Z" fill="#b4b4b4"/><rect x="7" y="645" width="6.9" height="7" fill="#dcdcdc"/><rect x="4.6" y="642.6" width="5.6" height="5.6" fill="#111" stroke="#dcdcdc" stroke-width="0.8"/><path d="M23.5 642.8 H29.5 V650.5" stroke="#dcdcdc" stroke-width="1.2" fill="none"/><path d="M22.2 642.8 L25 640.6 L25 645Z M29.5 651.6 L27.3 648.8 L31.7 648.8Z" fill="#dcdcdc"/><rect x="10.7" y="698.5" width="15.8" height="11.8" fill="none" stroke="#dcdcdc" stroke-width="1"/><circle cx="18.5" cy="704.4" r="4" fill="none" stroke="#dcdcdc" stroke-width="1" stroke-dasharray="0.9 1.2"/><rect x="15.8" y="724.5" width="10.7" height="8.5" fill="none" stroke="#dcdcdc" stroke-width="1.1"/><rect x="10.7" y="728" width="10.2" height="8" fill="#535353" stroke="#dcdcdc" stroke-width="1.1"/><path d="M15.8 724.5H26.5" stroke="#dcdcdc" stroke-width="1.6"/><path d="M29 739H32.5V735.5Z" fill="#b4b4b4"/></svg>
<svg style="left:1608px;top:65px" width="9" height="7" viewBox="0 0 9 7"><path d="M4.2 1L1.2 3.5L4.2 6L3.2 3.5Z M8.2 1L5.2 3.5L8.2 6L7.2 3.5Z" fill="#d6d6d6" stroke="#d6d6d6" stroke-width="0.6"/></svg><svg style="left:1906px;top:65px" width="9" height="7" viewBox="0 0 9 7"><path d="M1 1L4 3.5L1 6L2 3.5Z M5 1L8 3.5L5 6L6 3.5Z" fill="#d6d6d6" stroke="#d6d6d6" stroke-width="0.6"/></svg><svg style="left:5px;top:65px" width="9" height="7" viewBox="0 0 9 7"><path d="M1 1L4 3.5L1 6L2 3.5Z M5 1L8 3.5L5 6L6 3.5Z" fill="#d6d6d6" stroke="#d6d6d6" stroke-width="0.6"/></svg><div class="a" style="left:1584px;top:142px;width:37px;height:1px;background:#383838;"></div><div class="a" style="left:1584px;top:183px;width:37px;height:1px;background:#383838;"></div><div class="a" style="left:1584px;top:252px;width:37px;height:1px;background:#383838;"></div><div class="a" style="left:1584px;top:293px;width:37px;height:1px;background:#383838;"></div><div class="a" style="left:1584px;top:362px;width:37px;height:1px;background:#383838;"></div><div class="a" style="left:1584px;top:403px;width:37px;height:1px;background:#383838;"></div><div class="a" style="left:1593px;top:77px;width:1px;height:4px;background:#3e3e3e;"></div><div class="a" style="left:1595px;top:77px;width:1px;height:4px;background:#3e3e3e;"></div><div class="a" style="left:1597px;top:77px;width:1px;height:4px;background:#3e3e3e;"></div><div class="a" style="left:1599px;top:77px;width:1px;height:4px;background:#3e3e3e;"></div><div class="a" style="left:1601px;top:77px;width:1px;height:4px;background:#3e3e3e;"></div><div class="a" style="left:1603px;top:77px;width:1px;height:4px;background:#3e3e3e;"></div><div class="a" style="left:1605px;top:77px;width:1px;height:4px;background:#3e3e3e;"></div><div class="a" style="left:1607px;top:77px;width:1px;height:4px;background:#3e3e3e;"></div><div class="a" style="left:1609px;top:77px;width:1px;height:4px;background:#3e3e3e;"></div><div class="a" style="left:1611px;top:77px;width:1px;height:4px;background:#3e3e3e;"></div><div class="a" style="left:1593px;top:146px;width:1px;height:4px;background:#3e3e3e;"></div><div class="a" style="left:1595px;top:146px;width:1px;height:4px;background:#3e3e3e;"></div><div class="a" style="left:1597px;top:146px;width:1px;height:4px;background:#3e3e3e;"></div><div class="a" style="left:1599px;top:146px;width:1px;height:4px;background:#3e3e3e;"></div><div class="a" style="left:1601px;top:146px;width:1px;height:4px;background:#3e3e3e;"></div><div class="a" style="left:1603px;top:146px;width:1px;height:4px;background:#3e3e3e;"></div><div class="a" style="left:1605px;top:146px;width:1px;height:4px;background:#3e3e3e;"></div><div class="a" style="left:1607px;top:146px;width:1px;height:4px;background:#3e3e3e;"></div><div class="a" style="left:1609px;top:146px;width:1px;height:4px;background:#3e3e3e;"></div><div class="a" style="left:1611px;top:146px;width:1px;height:4px;background:#3e3e3e;"></div><div class="a" style="left:1593px;top:187px;width:1px;height:4px;background:#3e3e3e;"></div><div class="a" style="left:1595px;top:187px;width:1px;height:4px;background:#3e3e3e;"></div><div class="a" style="left:1597px;top:187px;width:1px;height:4px;background:#3e3e3e;"></div><div class="a" style="left:1599px;top:187px;width:1px;height:4px;background:#3e3e3e;"></div><div class="a" style="left:1601px;top:187px;width:1px;height:4px;background:#3e3e3e;"></div><div class="a" style="left:1603px;top:187px;width:1px;height:4px;background:#3e3e3e;"></div><div class="a" style="left:1605px;top:187px;width:1px;height:4px;background:#3e3e3e;"></div><div class="a" style="left:1607px;top:187px;width:1px;height:4px;background:#3e3e3e;"></div><div class="a" style="left:1609px;top:187px;width:1px;height:4px;background:#3e3e3e;"></div><div class="a" style="left:1611px;top:187px;width:1px;height:4px;background:#3e3e3e;"></div><div class="a" style="left:1593px;top:256px;width:1px;height:4px;background:#3e3e3e;"></div><div class="a" style="left:1595px;top:256px;width:1px;height:4px;background:#3e3e3e;"></div><div class="a" style="left:1597px;top:256px;width:1px;height:4px;background:#3e3e3e;"></div><div class="a" style="left:1599px;top:256px;width:1px;height:4px;background:#3e3e3e;"></div><div class="a" style="left:1601px;top:256px;width:1px;height:4px;background:#3e3e3e;"></div><div class="a" style="left:1603px;top:256px;width:1px;height:4px;background:#3e3e3e;"></div><div class="a" style="left:1605px;top:256px;width:1px;height:4px;background:#3e3e3e;"></div><div class="a" style="left:1607px;top:256px;width:1px;height:4px;background:#3e3e3e;"></div><div class="a" style="left:1609px;top:256px;width:1px;height:4px;background:#3e3e3e;"></div><div class="a" style="left:1611px;top:256px;width:1px;height:4px;background:#3e3e3e;"></div><div class="a" style="left:1593px;top:297px;width:1px;height:4px;background:#3e3e3e;"></div><div class="a" style="left:1595px;top:297px;width:1px;height:4px;background:#3e3e3e;"></div><div class="a" style="left:1597px;top:297px;width:1px;height:4px;background:#3e3e3e;"></div><div class="a" style="left:1599px;top:297px;width:1px;height:4px;background:#3e3e3e;"></div><div class="a" style="left:1601px;top:297px;width:1px;height:4px;background:#3e3e3e;"></div><div class="a" style="left:1603px;top:297px;width:1px;height:4px;background:#3e3e3e;"></div><div class="a" style="left:1605px;top:297px;width:1px;height:4px;background:#3e3e3e;"></div><div class="a" style="left:1607px;top:297px;width:1px;height:4px;background:#3e3e3e;"></div><div class="a" style="left:1609px;top:297px;width:1px;height:4px;background:#3e3e3e;"></div><div class="a" style="left:1611px;top:297px;width:1px;height:4px;background:#3e3e3e;"></div><div class="a" style="left:1593px;top:367px;width:1px;height:4px;background:#3e3e3e;"></div><div class="a" style="left:1595px;top:367px;width:1px;height:4px;background:#3e3e3e;"></div><div class="a" style="left:1597px;top:367px;width:1px;height:4px;background:#3e3e3e;"></div><div class="a" style="left:1599px;top:367px;width:1px;height:4px;background:#3e3e3e;"></div><div class="a" style="left:1601px;top:367px;width:1px;height:4px;background:#3e3e3e;"></div><div class="a" style="left:1603px;top:367px;width:1px;height:4px;background:#3e3e3e;"></div><div class="a" style="left:1605px;top:367px;width:1px;height:4px;background:#3e3e3e;"></div><div class="a" style="left:1607px;top:367px;width:1px;height:4px;background:#3e3e3e;"></div><div class="a" style="left:1609px;top:367px;width:1px;height:4px;background:#3e3e3e;"></div><div class="a" style="left:1611px;top:367px;width:1px;height:4px;background:#3e3e3e;"></div><svg style="left:0;top:0" width="1920" height="420" viewBox="0 0 1920 420"><rect x="1597.6" y="89.6" width="4" height="4" fill="none" stroke="#dcdcdc" stroke-width="1.2"/><rect x="1597.6" y="95.6" width="4" height="4" fill="none" stroke="#dcdcdc" stroke-width="1.2"/><rect x="1597" y="101" width="5" height="5" fill="#dcdcdc"/><path d="M1605 90 L1611 90.3 L1606.5 95 Z" fill="#dcdcdc"/><path d="M1607.5 92 Q1612 96 1606 104" stroke="#dcdcdc" stroke-width="1.5" fill="none"/><path d="M1598 119 L1611.3 126 L1598 133Z" fill="#dcdcdc"/><path d="M1596.5 160 L1600.3 158 L1604 160 L1604 165 L1600.3 167 L1596.5 165Z" fill="none" stroke="#dcdcdc" stroke-width="1"/><path d="M1596.5 160 L1600.3 162 L1604 160 M1600.3 162V167" stroke="#dcdcdc" stroke-width="0.9"/><rect x="1606.5" y="158" width="4.5" height="4" fill="#dcdcdc"/><rect x="1606.5" y="163" width="4.5" height="4" fill="#dcdcdc"/><rect x="1596" y="170" width="15" height="4" fill="#dcdcdc"/><path d="M1607 171 L1610 171 L1608.5 173Z" fill="#535353"/><rect x="1600" y="208" width="8" height="9" fill="#dcdcdc"/><path d="M1601.5 208 L1599 200 M1604 208 V198 M1606.5 208 L1609 201" stroke="#dcdcdc" stroke-width="1"/><ellipse cx="1598.5" cy="200" rx="1.8" ry="3" transform="rotate(-25 1598.5 200)" fill="#dcdcdc"/><ellipse cx="1604" cy="198.5" rx="1.4" ry="2.5" fill="#dcdcdc"/><ellipse cx="1609.5" cy="201" rx="2.5" ry="1.8" fill="#dcdcdc"/><path d="M1593 230.5 Q1597 227 1602 229 L1602 232 Q1597 234 1593 230.5Z" fill="#dcdcdc"/><rect x="1603" y="229.6" width="10" height="1.8" fill="#dcdcdc"/><rect x="1595" y="237.8" width="9" height="1.8" fill="#dcdcdc"/><path d="M1605 238.7 L1612 234 Q1614 239 1612 244Z" fill="#dcdcdc"/><rect x="1593" y="264" width="1.6" height="1.6" fill="#dcdcdc"/><rect x="1593" y="267.5" width="1.6" height="1.6" fill="#dcdcdc"/><rect x="1593" y="271" width="1.6" height="1.6" fill="#dcdcdc"/><path d="M1596 264.8H1600 M1596 268.3H1600 M1596 271.8H1600" stroke="#dcdcdc" stroke-width="1"/><circle cx="1605.8" cy="271.5" r="3" fill="#dcdcdc"/><rect x="1605" y="273" width="1.6" height="4" fill="#dcdcdc"/><rect x="1599" y="277" width="14" height="4" rx="1" fill="#dcdcdc"/><rect x="1600" y="282.3" width="12" height="1.2" fill="#dcdcdc"/><path d="M1597.5 322.8 L1603.2 311 L1608.9 322.8 M1599.5 318.8H1607" stroke="#dcdcdc" stroke-width="1.2" fill="none"/><path d="M1610.8 308V325.5" stroke="#dcdcdc" stroke-width="1"/><path d="M1604 338.5 A3.5 3.6 0 0 0 1604 345.5Z" fill="#dcdcdc"/><path d="M1604 338.5H1609.2 M1605.2 338.5V353 M1608.5 338.5V353" stroke="#dcdcdc" stroke-width="1.2" fill="none"/><path d="M1603.5 378.3 L1610.8 382 L1603.5 385.8 L1596.2 382Z" fill="#7a7a7a"/><path d="M1596.2 382 L1603.5 385.8 L1603.5 394.5 L1596.2 390.5Z" fill="#9a9a9a"/><path d="M1603.5 378.3 L1610.8 382 L1610.8 390.5 L1603.5 394.5 L1596.2 390.5 L1596.2 382Z M1596.2 382 L1603.5 385.8 L1610.8 382 M1603.5 385.8V394.5" fill="none" stroke="#dcdcdc" stroke-width="1"/></svg><div class="a" style="left:1624px;top:74px;width:296px;height:27px;background:#424242;"></div><div class="a" style="left:1624px;top:74px;width:70px;height:28px;background:#535353;"></div><div class="a" style="left:1736px;top:74px;width:1px;height:27px;background:#383838;"></div><div class="a" style="left:1694px;top:74px;width:1px;height:27px;background:#383838;"></div><div class="t" style="left:1633px;top:81px;font-size:12px;color:#ececec;--w:52;">ヒストグラム</div><div class="t" style="left:1704px;top:81px;font-size:12px;color:#b4b4b4;--w:23;">情報</div><div class="a" style="left:1903px;top:84px;width:10px;height:1px;background:#c8c8c8;"></div><div class="a" style="left:1903px;top:86px;width:10px;height:1px;background:#c8c8c8;"></div><div class="a" style="left:1903px;top:88px;width:10px;height:1px;background:#c8c8c8;"></div><div class="a" style="left:1903px;top:90px;width:10px;height:1px;background:#c8c8c8;"></div><div class="a" style="left:1628px;top:111px;width:198px;height:84px;background:#444444;border:1px solid #3a3a3a"></div><div class="a" style="left:1629px;top:112px;width:196px;height:82px;background:#444444;border:1px solid #4c4c4c"></div><svg style="left:1627px;top:111px" width="200" height="84"><path d="M3.5 83V80.6M4.5 83V81.7M5.5 83V82.2M6.5 83V81.1M8.5 83V81.7M9.5 83V82.2M11.5 83V79.3M13.5 83V82.2M14.5 83V81.1M16.5 83V79.5M17.5 83V81.7M18.5 83V82.2M19.5 83V80.6M20.5 83V79.5M21.5 83V80.4M22.5 83V81.1M23.5 83V82.2M24.5 83V80.6M25.5 83V78.4M27.5 83V75.1M28.5 83V77.3M29.5 83V81.7M37.5 83V82.2M39.5 83V82.6M40.5 83V81.7M42.5 83V82.4M43.5 83V81.5M45.5 83V82.1M46.5 83V80.6M50.5 83V4.2M51.5 83V4.2M52.5 83V4.2M53.5 83V78.4M54.5 83V75.1M55.5 83V64.2M56.5 83V76.2M57.5 83V4.2M58.5 83V79.5M59.5 83V80.4M60.5 83V81.1M61.5 83V81.7M62.5 83V80.9M63.5 83V80.3M64.5 83V79.5M65.5 83V76.2M66.5 83V74.0M67.5 83V63.1M68.5 83V65.6M69.5 83V70.7M70.5 83V62.3M71.5 83V55.4M72.5 83V74.0M73.5 83V59.8M74.5 83V66.4M75.5 83V62.0M76.5 83V67.9M77.5 83V72.9M78.5 83V31.9M79.5 83V72.9M80.5 83V66.4M81.5 83V54.5M82.5 83V46.1M83.5 83V62.0M84.5 83V21.0M85.5 83V64.2M86.5 83V57.6M87.5 83V39.1M88.5 83V25.3M89.5 83V4.2M90.5 83V40.1M91.5 83V42.4M92.5 83V44.5M93.5 83V4.2M94.5 83V35.7M95.5 83V4.2M96.5 83V8.4M97.5 83V49.2M98.5 83V52.1M99.5 83V46.7M100.5 83V42.3M101.5 83V57.6M102.5 83V52.8M103.5 83V45.0M104.5 83V52.6M105.5 83V57.6M106.5 83V65.3M107.5 83V65.9M108.5 83V66.4M109.5 83V67.1M110.5 83V67.7M111.5 83V68.6M112.5 83V68.9M113.5 83V69.7M114.5 83V71.6M115.5 83V75.1M116.5 83V72.6M117.5 83V70.7M118.5 83V65.3M119.5 83V65.3M120.5 83V57.3M121.5 83V50.0M122.5 83V68.6M123.5 83V65.8M124.5 83V63.1M125.5 83V54.3M126.5 83V62.7M127.5 83V70.7M128.5 83V41.2M129.5 83V70.7M130.5 83V51.1M131.5 83V41.8M132.5 83V27.0M133.5 83V66.4M134.5 83V4.2M135.5 83V65.3M136.5 83V47.8M137.5 83V37.4M138.5 83V50.1M139.5 83V64.2M140.5 83V37.9M141.5 83V72.9M142.5 83V75.1M143.5 83V62.0M144.5 83V64.8M145.5 83V66.4M146.5 83V59.3M147.5 83V77.3M148.5 83V78.4M149.5 83V75.1M150.5 83V74.4M151.5 83V74.0M152.5 83V80.6M153.5 83V75.1M156.5 83V81.7M169.5 83V81.7M179.5 83V81.1M183.5 83V81.7" stroke="#ffffff" stroke-width="1" shape-rendering="crispEdges"/></svg><svg style="left:1806px;top:118px" width="14" height="13" viewBox="0 0 14 13"><path d="M7 0.5 L13.5 12.5 H0.5Z" fill="#dcdcdc"/><rect x="6" y="4" width="2" height="5" fill="#444"/><rect x="6" y="10" width="2" height="1.5" fill="#444"/></svg><div class="a" style="left:1624px;top:198px;width:296px;height:3px;background:#383838;"></div><div class="a" style="left:1624px;top:201px;width:296px;height:27px;background:#424242;"></div><div class="a" style="left:1684px;top:201px;width:65px;height:28px;background:#535353;"></div><div class="a" style="left:1683px;top:201px;width:1px;height:27px;background:#383838;"></div><div class="t" style="left:1633px;top:208px;font-size:12px;color:#b4b4b4;--w:41;">ライブラリ</div><div class="t" style="left:1693px;top:208px;font-size:12px;color:#ececec;--w:47;">色調補正</div><div class="a" style="left:1903px;top:211px;width:10px;height:1px;background:#c8c8c8;"></div><div class="a" style="left:1903px;top:213px;width:10px;height:1px;background:#c8c8c8;"></div><div class="a" style="left:1903px;top:215px;width:10px;height:1px;background:#c8c8c8;"></div><div class="a" style="left:1903px;top:217px;width:10px;height:1px;background:#c8c8c8;"></div><div class="t" style="left:1634px;top:238px;font-size:11px;color:#dadada;--w:81;">色調補正 を追加</div><svg style="left:1687px;top:259px" width="18" height="18" viewBox="0 0 18 18"><line x1="15.0" y1="9.0" x2="17.5" y2="9.0" stroke="#dedede" stroke-width="1.2"/><line x1="13.2" y1="13.2" x2="15.0" y2="15.0" stroke="#dedede" stroke-width="1.2"/><line x1="9.0" y1="15.0" x2="9.0" y2="17.5" stroke="#dedede" stroke-width="1.2"/><line x1="4.8" y1="13.2" x2="3.0" y2="15.0" stroke="#dedede" stroke-width="1.2"/><line x1="3.0" y1="9.0" x2="0.5" y2="9.0" stroke="#dedede" stroke-width="1.2"/><line x1="4.8" y1="4.8" x2="3.0" y2="3.0" stroke="#dedede" stroke-width="1.2"/><line x1="9.0" y1="3.0" x2="9.0" y2="0.5" stroke="#dedede" stroke-width="1.2"/><line x1="13.2" y1="4.8" x2="15.0" y2="3.0" stroke="#dedede" stroke-width="1.2"/><circle cx="9" cy="9" r="4.5" fill="none" stroke="#dedede" stroke-width="1.2"/><path d="M9 4.5 A4.5 4.5 0 0 0 9 13.5Z" fill="#dedede"/></svg><svg style="left:1710px;top:262px" width="19" height="12" viewBox="0 0 19 12"><path d="M0 12 V6 L1 8 L2 4 L3 7 L4 5 L5 8 L6 3 L7 6 L8 2 L9 6 L10 0 L11 5 L12 3 L13 7 L14 2 L15 7 L16 5 L17 8 L18 4 L19 8 V12Z" fill="#dedede"/></svg><svg style="left:1736px;top:261px" width="16" height="13" viewBox="0 0 16 13"><rect x="0.5" y="0.5" width="15" height="12" fill="none" stroke="#bdbdbd" stroke-width="1"/><path d="M5.5 0.5V12.5 M10.5 0.5V12.5 M0.5 4.5H15.5 M0.5 8.5H15.5" stroke="#9a9a9a" stroke-width="1"/><path d="M1 12 Q8 12 9 6 Q10 1 15 1" stroke="#dedede" stroke-width="1.3" fill="none"/></svg><svg style="left:1760px;top:262px" width="16" height="13" viewBox="0 0 16 13"><rect x="0.5" y="0.5" width="15" height="12" fill="#dedede"/><path d="M1 12 L15 1 V12Z" fill="#4a4a4a"/><path d="M2 4H7 M4.5 1.5V6.5 M9 9.5H14" stroke="#333" stroke-width="1.3"/><path d="M9 9.5H14" stroke="#dedede" stroke-width="1.3"/></svg><svg style="left:1784px;top:262px" width="15" height="14" viewBox="0 0 15 14"><defs><radialGradient id="vg"><stop offset="0" stop-color="#555"/><stop offset="1" stop-color="#aaa"/></radialGradient></defs><path d="M0.5 0.5 H14.5 L7.5 13.5Z" fill="url(#vg)" stroke="#dedede" stroke-width="1.2"/></svg><svg style="left:1676px;top:287px" width="16" height="13" viewBox="0 0 16 13"><defs><linearGradient id="hg" x1="0" x2="1"><stop offset="0" stop-color="#111"/><stop offset="1" stop-color="#eee"/></linearGradient></defs><rect x="0.5" y="0.5" width="15" height="12" fill="#dedede"/><rect x="1.5" y="1.5" width="13" height="4" fill="#555"/><path d="M3 1.5V5.5 M6 1.5V5.5 M9 1.5V5.5 M12 1.5V5.5" stroke="#ccc" stroke-width="1"/><rect x="1.5" y="6.5" width="13" height="5" fill="url(#hg)"/></svg><svg style="left:1699px;top:286px" width="18" height="17" viewBox="0 0 18 17"><path d="M9 2 V4 M2 4 H16" stroke="#dedede" stroke-width="1.2"/><circle cx="9" cy="2.5" r="1.5" fill="none" stroke="#dedede" stroke-width="1"/><path d="M3.5 4 L0.5 11 H6.5Z M14.5 4 L11.5 11 H17.5Z" fill="none" stroke="#dedede" stroke-width="1"/><path d="M0 11 A3.5 3.5 0 0 0 7 11Z M11 11 A3.5 3.5 0 0 0 18 11Z" fill="#dedede"/></svg><svg style="left:1724px;top:287px" width="16" height="13" viewBox="0 0 16 13"><rect x="0.5" y="0.5" width="15" height="12" fill="#dedede"/><rect x="1.5" y="1.5" width="6" height="10" fill="#4a4a4a"/></svg><svg style="left:1747px;top:287px" width="18" height="17" viewBox="0 0 18 17"><path d="M0.5 3.5 H4 L5.5 1 H10 L11.5 3.5 H13.5 V11 H0.5Z" fill="#dedede"/><circle cx="7" cy="7" r="2.5" fill="#555" stroke="#555"/><circle cx="7" cy="7" r="1.6" fill="#dedede"/><circle cx="13.5" cy="12.5" r="3.5" fill="#555" stroke="#dedede" stroke-width="1.2"/></svg><svg style="left:1771px;top:286px" width="17" height="17" viewBox="0 0 17 17"><circle cx="8.5" cy="5.5" r="5" fill="#8a8a8a"/><circle cx="5" cy="11" r="5" fill="#b8b8b8"/><circle cx="12" cy="11" r="5" fill="#a0a0a0"/><circle cx="8.5" cy="9" r="2.2" fill="#555"/></svg><svg style="left:1796px;top:287px" width="16" height="13" viewBox="0 0 16 13"><rect x="0.5" y="0.5" width="15" height="12" fill="#dedede"/><path d="M2 2H5V5H2Z M6.5 2H9.5V5H6.5Z M11 2H14V5H11Z M2 6.5H5V9.5H2Z M6.5 6.5H9.5V9.5H6.5Z M11 6.5H14V9.5H11Z" fill="#555"/><path d="M2 10H14V11.5H2Z" fill="#444"/></svg><svg style="left:1688px;top:315px" width="16" height="13" viewBox="0 0 16 13"><rect x="0.5" y="0.5" width="15" height="12" fill="#dedede"/><rect x="1.5" y="1.5" width="13" height="10" fill="#4a4a4a"/><ellipse cx="8" cy="6.5" rx="3.5" ry="5" transform="rotate(40 8 6.5)" fill="#dedede"/><path d="M1.5 11.5 L14.5 1.5" stroke="#4a4a4a" stroke-width="1"/></svg><svg style="left:1712px;top:315px" width="16" height="13" viewBox="0 0 16 13"><defs><linearGradient id="pg" x1="0" y1="1" x2="1" y2="0"><stop offset="0" stop-color="#777"/><stop offset="0.3" stop-color="#bbb"/><stop offset="0.5" stop-color="#888"/><stop offset="0.7" stop-color="#ccc"/><stop offset="1" stop-color="#777"/></linearGradient></defs><rect x="0.5" y="0.5" width="15" height="12" fill="url(#pg)" stroke="#dedede" stroke-width="1"/></svg><svg style="left:1736px;top:315px" width="16" height="13" viewBox="0 0 16 13"><rect x="0.5" y="0.5" width="15" height="12" fill="#dedede"/><path d="M1.5 10 L5 8 L6 6 L10 5 L11 3 L14.5 2 V5 L12 6 L11 8 L7 9 L6 11.5 H1.5Z" fill="#333"/></svg><svg style="left:1760px;top:315px" width="16" height="13" viewBox="0 0 16 13"><rect x="0.5" y="0.5" width="15" height="12" fill="#dedede"/><path d="M1.5 1.5 L8 6.5 L14.5 1.5Z" fill="#888"/><path d="M1.5 11.5 L8 6.5 L14.5 11.5Z" fill="#9a9a9a"/><path d="M1.5 1.5 L8 6.5 L1.5 11.5Z M14.5 1.5 L8 6.5 L14.5 11.5Z" fill="#dedede"/></svg><svg style="left:1784px;top:315px" width="16" height="13" viewBox="0 0 16 13"><defs><linearGradient id="gm" x1="0" x2="1"><stop offset="0" stop-color="#111"/><stop offset="1" stop-color="#eee"/></linearGradient></defs><rect x="0.5" y="0.5" width="15" height="12" fill="url(#gm)" stroke="#dedede" stroke-width="1"/></svg><div class="a" style="left:1624px;top:340px;width:296px;height:4px;background:#383838;"></div><div class="a" style="left:1624px;top:344px;width:296px;height:28px;background:#424242;"></div><div class="a" style="left:1680px;top:344px;width:63px;height:28px;background:#535353;"></div><div class="a" style="left:1679px;top:344px;width:1px;height:28px;background:#383838;"></div><div class="t" style="left:1634px;top:352px;font-size:12px;color:#b4b4b4;--w:35;">レイヤー</div><div class="t" style="left:1689px;top:352px;font-size:12px;color:#ececec;--w:45;">チャンネル</div><div class="a" style="left:1903px;top:354px;width:10px;height:1px;background:#c8c8c8;"></div><div class="a" style="left:1903px;top:356px;width:10px;height:1px;background:#c8c8c8;"></div><div class="a" style="left:1903px;top:358px;width:10px;height:1px;background:#c8c8c8;"></div><div class="a" style="left:1903px;top:360px;width:10px;height:1px;background:#c8c8c8;"></div><div class="a" style="left:1624px;top:372px;width:296px;height:681px;background:#4e4e4e;"></div><div class="a" style="left:1624px;top:372px;width:279px;height:5px;background:#535353;"></div><div class="a" style="left:1903px;top:372px;width:16px;height:681px;background:#4a4a4a;"></div><div class="a" style="left:1624px;top:377px;width:279px;height:36px;background:#6a6a6a;"></div><div class="a" style="left:1624px;top:413px;width:279px;height:1px;background:#4a4a4a;"></div><svg style="left:1629px;top:390px" width="14" height="9" viewBox="0 0 14 9"><path d="M0.5 4.5 Q7 -2.5 13.5 4.5 Q7 11.5 0.5 4.5Z" fill="#dcdcdc"/><circle cx="7" cy="4.5" r="2.8" fill="#6a6a6a"/><circle cx="7" cy="4.5" r="1.6" fill="#dcdcdc"/></svg><svg style="left:1649px;top:379px" width="32" height="32"><rect width="32" height="32" fill="#1a1a1a"/><rect x="1" y="1" width="7" height="7" fill="#ad7e6e"/><rect x="9" y="1" width="14" height="7" fill="#7d5c4c"/><rect x="24" y="1" width="7" height="7" fill="#ad7e6e"/><rect x="1" y="9" width="7" height="8" fill="#3e4048"/><rect x="9" y="9" width="14" height="8" fill="#ad7e6e"/><rect x="24" y="9" width="7" height="8" fill="#8a8a8a"/><rect x="1" y="18" width="7" height="6" fill="#ad7e6e"/><rect x="9" y="18" width="14" height="6" fill="#ad7e6e"/><rect x="24" y="18" width="7" height="6" fill="#ad7e6e"/><rect x="1" y="25" width="7" height="6" fill="#ad7e6e"/><rect x="9" y="25" width="14" height="6" fill="#ad7e6e"/><rect x="24" y="25" width="7" height="6" fill="#ad7e6e"/></svg><div class="t" style="left:1687px;top:390px;font-size:11px;color:#ececec;--w:22;">RGB</div><div class="t" style="left:1861px;top:390px;font-size:10px;color:#e6e6e6;--w:28;">Ctrl+2</div><div class="a" style="left:1624px;top:414px;width:279px;height:36px;background:#6a6a6a;"></div><div class="a" style="left:1624px;top:450px;width:279px;height:1px;background:#4a4a4a;"></div><svg style="left:1629px;top:427px" width="14" height="9" viewBox="0 0 14 9"><path d="M0.5 4.5 Q7 -2.5 13.5 4.5 Q7 11.5 0.5 4.5Z" fill="#dcdcdc"/><circle cx="7" cy="4.5" r="2.8" fill="#6a6a6a"/><circle cx="7" cy="4.5" r="1.6" fill="#dcdcdc"/></svg><svg style="left:1649px;top:416px" width="32" height="32"><rect width="32" height="32" fill="#1a1a1a"/><rect x="1" y="1" width="7" height="7" fill="#bdbdbd"/><rect x="9" y="1" width="14" height="7" fill="#9a9a9a"/><rect x="24" y="1" width="7" height="7" fill="#bdbdbd"/><rect x="1" y="9" width="7" height="8" fill="#555"/><rect x="9" y="9" width="14" height="8" fill="#bdbdbd"/><rect x="24" y="9" width="7" height="8" fill="#999"/><rect x="1" y="18" width="7" height="6" fill="#bdbdbd"/><rect x="9" y="18" width="14" height="6" fill="#bdbdbd"/><rect x="24" y="18" width="7" height="6" fill="#bdbdbd"/><rect x="1" y="25" width="7" height="6" fill="#bdbdbd"/><rect x="9" y="25" width="14" height="6" fill="#bdbdbd"/><rect x="24" y="25" width="7" height="6" fill="#bdbdbd"/></svg><div class="t" style="left:1687px;top:427px;font-size:11px;color:#ececec;--w:25;">レッド</div><div class="t" style="left:1861px;top:427px;font-size:10px;color:#e6e6e6;--w:28;">Ctrl+3</div><div class="a" style="left:1624px;top:451px;width:279px;height:36px;background:#6a6a6a;"></div><div class="a" style="left:1624px;top:487px;width:279px;height:1px;background:#4a4a4a;"></div><svg style="left:1629px;top:464px" width="14" height="9" viewBox="0 0 14 9"><path d="M0.5 4.5 Q7 -2.5 13.5 4.5 Q7 11.5 0.5 4.5Z" fill="#dcdcdc"/><circle cx="7" cy="4.5" r="2.8" fill="#6a6a6a"/><circle cx="7" cy="4.5" r="1.6" fill="#dcdcdc"/></svg><svg style="left:1649px;top:453px" width="32" height="32"><rect width="32" height="32" fill="#1a1a1a"/><rect x="1" y="1" width="7" height="7" fill="#a8a8a8"/><rect x="9" y="1" width="14" height="7" fill="#8a8a8a"/><rect x="24" y="1" width="7" height="7" fill="#a8a8a8"/><rect x="1" y="9" width="7" height="8" fill="#4a4a4a"/><rect x="9" y="9" width="14" height="8" fill="#a8a8a8"/><rect x="24" y="9" width="7" height="8" fill="#888"/><rect x="1" y="18" width="7" height="6" fill="#a8a8a8"/><rect x="9" y="18" width="14" height="6" fill="#a8a8a8"/><rect x="24" y="18" width="7" height="6" fill="#a8a8a8"/><rect x="1" y="25" width="7" height="6" fill="#a8a8a8"/><rect x="9" y="25" width="14" height="6" fill="#a8a8a8"/><rect x="24" y="25" width="7" height="6" fill="#a8a8a8"/></svg><div class="t" style="left:1687px;top:464px;font-size:11px;color:#ececec;--w:35;">グリーン</div><div class="t" style="left:1861px;top:464px;font-size:10px;color:#e6e6e6;--w:28;">Ctrl+4</div><div class="a" style="left:1624px;top:488px;width:279px;height:36px;background:#6a6a6a;"></div><div class="a" style="left:1624px;top:524px;width:279px;height:1px;background:#4a4a4a;"></div><svg style="left:1629px;top:501px" width="14" height="9" viewBox="0 0 14 9"><path d="M0.5 4.5 Q7 -2.5 13.5 4.5 Q7 11.5 0.5 4.5Z" fill="#dcdcdc"/><circle cx="7" cy="4.5" r="2.8" fill="#6a6a6a"/><circle cx="7" cy="4.5" r="1.6" fill="#dcdcdc"/></svg><svg style="left:1649px;top:490px" width="32" height="32"><rect width="32" height="32" fill="#1a1a1a"/><rect x="1" y="1" width="7" height="7" fill="#9a9a9a"/><rect x="9" y="1" width="14" height="7" fill="#7d7d7d"/><rect x="24" y="1" width="7" height="7" fill="#9a9a9a"/><rect x="1" y="9" width="7" height="8" fill="#4d4d4d"/><rect x="9" y="9" width="14" height="8" fill="#9a9a9a"/><rect x="24" y="9" width="7" height="8" fill="#878787"/><rect x="1" y="18" width="7" height="6" fill="#9a9a9a"/><rect x="9" y="18" width="14" height="6" fill="#9a9a9a"/><rect x="24" y="18" width="7" height="6" fill="#9a9a9a"/><rect x="1" y="25" width="7" height="6" fill="#9a9a9a"/><rect x="9" y="25" width="14" height="6" fill="#9a9a9a"/><rect x="24" y="25" width="7" height="6" fill="#9a9a9a"/></svg><div class="t" style="left:1687px;top:501px;font-size:11px;color:#ececec;--w:29;">ブルー</div><div class="t" style="left:1861px;top:501px;font-size:10px;color:#e6e6e6;--w:28;">Ctrl+5</div><div class="a" style="left:1624px;top:525px;width:279px;height:36px;background:#535353;"></div><div class="a" style="left:1624px;top:561px;width:279px;height:1px;background:#4a4a4a;"></div><div class="a" style="left:1630px;top:537px;width:13px;height:13px;background:transparent;border:1px solid #454545"></div><svg style="left:1649px;top:527px" width="32" height="32"><rect width="32" height="32" fill="#000" stroke="#2a2a2a"/><rect x="6" y="2" width="10" height="6" fill="#fff" opacity="0.8"/><rect x="3" y="10" width="2" height="2" fill="#fff"/><rect x="27" y="8" width="2" height="4" fill="#fff"/><rect x="9" y="10" width="8" height="1" fill="#fff"/></svg><div class="t" style="left:1687px;top:538px;font-size:11px;color:#ececec;--w:76;">アルファチャンネル 1</div><div class="t" style="left:1861px;top:538px;font-size:10px;color:#e6e6e6;--w:28;">Ctrl+6</div><div class="a" style="left:1624px;top:1053px;width:296px;height:25px;background:#535353;"></div><svg style="left:1789px;top:1059px" width="12" height="12" viewBox="0 0 12 12"><circle cx="6" cy="6" r="5.3" fill="none" stroke="#dcdcdc" stroke-width="1.2" stroke-dasharray="1.6 1.4"/></svg><svg style="left:1817px;top:1060px" width="14" height="11" viewBox="0 0 14 11"><rect x="0" y="0" width="14" height="11" fill="#a6a6a6"/><circle cx="7" cy="5.5" r="3" fill="#535353"/></svg><svg style="left:1851px;top:1060px" width="11" height="12" viewBox="0 0 11 12"><path d="M0.75 0.75 H10.25 V11.25 H4 L0.75 8Z" fill="none" stroke="#dcdcdc" stroke-width="1.4"/><path d="M0.75 8 H4 V11.25" fill="none" stroke="#dcdcdc" stroke-width="1.2"/></svg><svg style="left:1879px;top:1059px" width="12" height="13" viewBox="0 0 12 13"><path d="M0 2.5H12 M4 2.5V0.75H8V2.5" stroke="#dcdcdc" stroke-width="1.3" fill="none"/><path d="M1.5 3.5 V12.25 H10.5 V3.5" stroke="#dcdcdc" stroke-width="1.3" fill="none"/><path d="M4 5V11 M6 5V11 M8 5V11" stroke="#dcdcdc" stroke-width="1"/></svg>
<script>
document.querySelectorAll('.t').forEach(function(e){var w=parseFloat(getComputedStyle(e).getPropertyValue('--w'));if(w){var r=e.getBoundingClientRect().width;if(r>0){e.style.transform='scaleX('+(w/r)+')';}}});
</script></body></html>
